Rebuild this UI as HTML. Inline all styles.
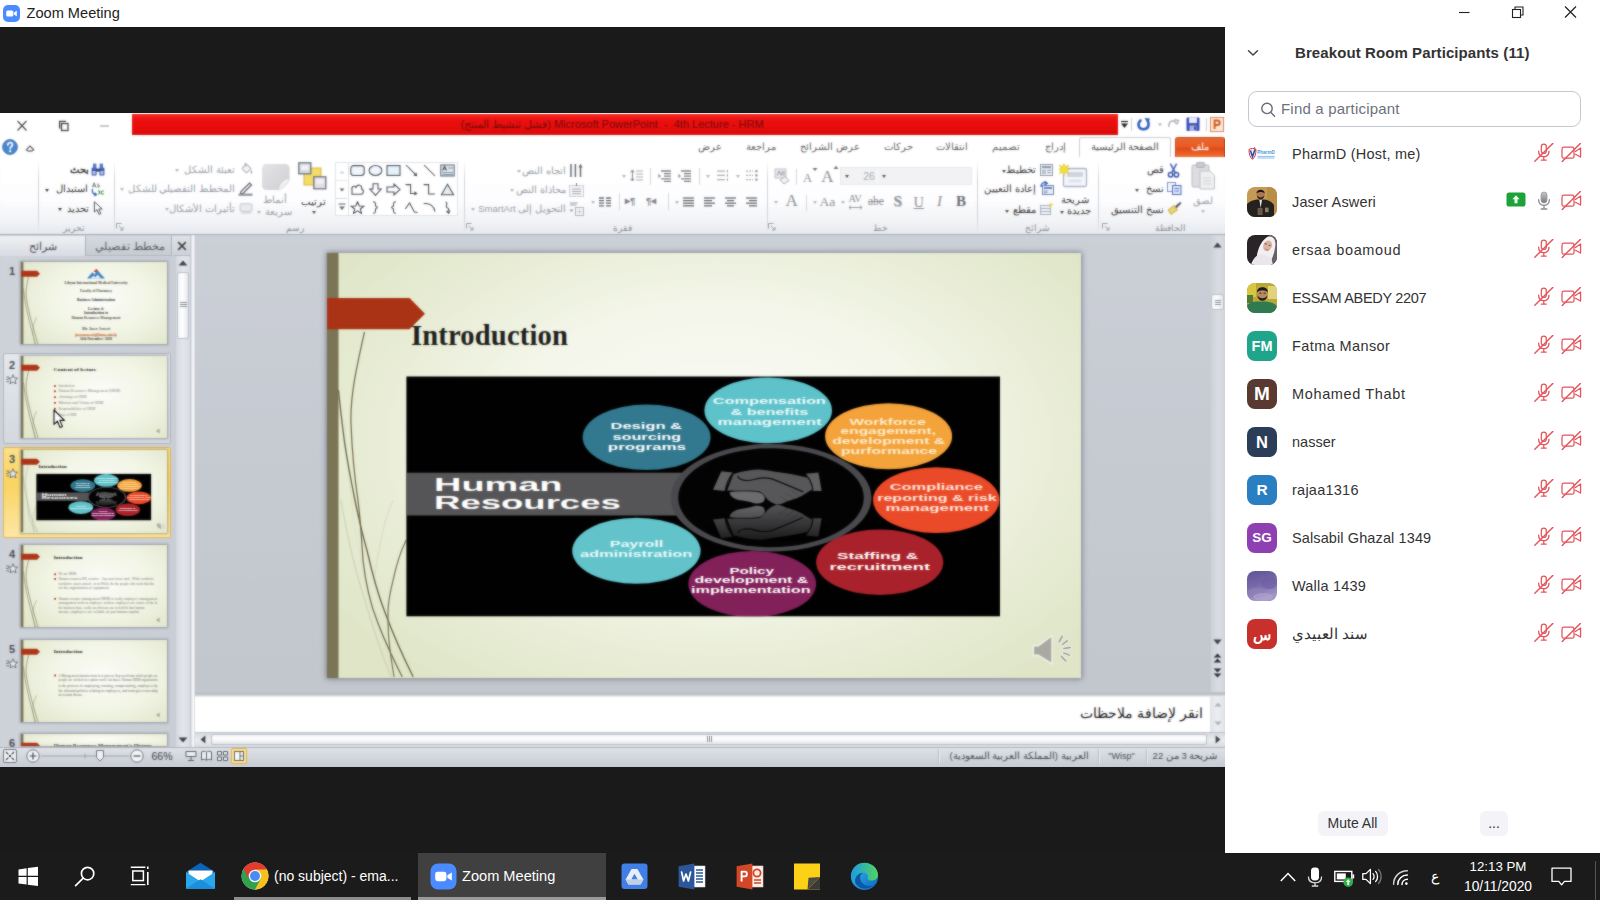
<!DOCTYPE html>
<html>
<head>
<meta charset="utf-8">
<title>Zoom Meeting</title>
<style>
*{box-sizing:border-box;margin:0;padding:0}
html,body{width:1600px;height:900px;overflow:hidden;background:#1a1a1a;font-family:"Liberation Sans",sans-serif;}
.abs{position:absolute}
#root{position:relative;width:1600px;height:900px;overflow:hidden;background:#1a1a1a}
#ztitle{position:absolute;left:0;top:0;width:1600px;height:27px;background:#fff}
#ztitle .txt{position:absolute;left:26.5px;top:5px;font-size:14.6px;color:#222}
#panel{position:absolute;left:1225px;top:27px;width:375px;height:826px;background:#fff}
#taskbar{position:absolute;left:0;top:853px;width:1600px;height:47px;background:#1b1b1b}
#pptin{position:absolute;left:0;top:0;width:1225px;height:654px;}
#ppt{position:absolute;left:0;top:113px;width:1225px;height:654px;background:#fff;overflow:hidden}
.phead{position:absolute;left:70px;top:17px;font-weight:bold;font-size:15px;color:#333;white-space:nowrap;letter-spacing:0.09px}
.psearch{position:absolute;left:23px;top:64px;width:333px;height:36px;border:1px solid #c4c6d0;border-radius:9px;background:#fff}
.psearch span{position:absolute;left:32px;top:8px;font-size:15px;letter-spacing:0.2px;color:#6c727c;white-space:nowrap}
.prow{position:absolute;left:0;width:375px;height:48px}
.pav{position:absolute;left:22px;top:9px;width:30px;height:30px;border-radius:8px;color:#fff;font-weight:bold;text-align:center;line-height:30px;overflow:hidden}
.pname{position:absolute;left:67px;top:16px;font-size:14.5px;color:#333;white-space:nowrap;line-height:17px}
.pbtn{position:absolute;height:25px;border-radius:6px;background:#f3f3f8;color:#333;font-size:14px;text-align:center;line-height:24px}
.tbt{position:absolute;top:14px;color:#fff;font-size:14px;line-height:18px;white-space:nowrap}
.tbc{position:absolute;left:1448px;width:100px;text-align:center;color:#fff;font-size:13.5px;line-height:17px;white-space:nowrap}
.ar{font-family:"Liberation Sans",sans-serif}
.tab{position:absolute;top:27px;height:16px;line-height:14px;font-size:10px;color:#666;text-align:center;white-space:nowrap;direction:rtl}
.rt{position:absolute;line-height:14px;white-space:nowrap;direction:rtl}
.th{position:absolute;overflow:hidden;background:radial-gradient(ellipse 65% 75% at 55% 45%,#fbfcf8 0%,#f1f4e4 55%,#e2e7cd 100%);box-shadow:0 0 2px 1px rgba(90,95,105,0.5)}
</style>
</head>
<body>
<div id="root">
<div id="ztitle">
  <svg class="abs" style="left:3px;top:5px" width="17" height="17" viewBox="0 0 17 17"><rect x="0" y="0" width="17" height="17" rx="5" fill="#4a8cff"/><rect x="3.2" y="5.4" width="7.2" height="6.2" rx="1.6" fill="#fff"/><path d="M11 7.6 L13.8 5.8 V11.2 L11 9.4Z" fill="#fff"/></svg>
  <div class="txt">Zoom Meeting</div>
</div>
<div id="ppt"><div id="pptin">
<!-- title row -->
<div class="abs" style="left:0;top:0;width:1225px;height:23px;background:#fff"></div>
<svg class="abs" style="left:14px;top:5px" width="100" height="16" viewBox="0 0 100 16" fill="none" stroke="#444" stroke-width="1.1"><path d="M3.5 3 L12.5 12.5 M12.5 3 L3.5 12.5"/><rect x="47.5" y="5.5" width="6.5" height="7" stroke-width="1.3"/><path d="M45.6 10.5 V3.4 H52" stroke-width="1.3"/><path d="M86 8 H95" stroke="#999"/></svg>
<div class="abs" style="left:132px;top:1px;width:985.5px;height:21.3px;background:linear-gradient(#f42a22,#ec1010 30%,#e40c0c 75%,#d80a0a)"></div>
<div class="abs ar" style="left:440px;top:4px;width:344px;text-align:center;font-size:11px;line-height:14px;color:#780a0a;white-space:nowrap" dir="rtl">Microsoft PowerPoint &nbsp;-&nbsp; 4th Lecture - HRM (فشل تنشيط المنتج)</div>
<!-- quick access -->
<svg class="abs" style="left:1118px;top:1px" width="107" height="21" viewBox="0 0 107 21">
  <path d="M3 9.5 H10 L6.5 14Z" fill="#222"/><path d="M3 7.5 H10" stroke="#222" stroke-width="1.2"/>
  <path d="M13.5 4 V17" stroke="#c8ccd2" stroke-width="1"/>
  <path d="M22.5 6.5 C19.5 9 19.5 15.2 25.6 15.2 C31 15.2 31.6 9.6 29.6 6.6" fill="none" stroke="#2f5fc2" stroke-width="2.6" stroke-linecap="round"/><path d="M26.4 4 L31.8 4.4 L30.4 9.6Z" fill="#2f5fc2"/>
  <path d="M40 9.5 H44 L42 12Z" fill="#aaa"/>
  <path d="M51 13 C50 7 56 5 58 9.4 M56.5 5.6 L60.5 6.5 L58.6 10.6" fill="none" stroke="#b2b6bc" stroke-width="1.6"/>
  <rect x="68.5" y="3.5" width="13" height="13.5" rx="1" fill="#3d4fb4"/><rect x="71" y="3.5" width="8" height="5.6" fill="#e8ecf8"/><rect x="71.5" y="11.5" width="7" height="5.5" fill="#a9b4e4"/><rect x="76" y="12.4" width="2" height="3.6" fill="#3d4fb4"/>
  <path d="M88.5 4 V17" stroke="#c8ccd2" stroke-width="1"/>
  <rect x="92.5" y="3.5" width="13" height="14" fill="#fbe9d9" stroke="#d9885a" stroke-width="1"/><path d="M96.6 15 V6.4 H99.4 C102.4 6.4 102.4 11 99.4 11 H96.6" fill="none" stroke="#d4581c" stroke-width="2"/>
</svg>
<!-- tab row -->
<div class="abs" style="left:0;top:23px;width:1225px;height:21px;background:#fff"></div>
<div class="abs" style="left:0;top:43.5px;width:1225px;height:1px;background:#d4d8de"></div>
<div class="abs" style="left:1079px;top:23.5px;width:92px;height:21px;background:#fff;border:1px solid #c9cdd4;border-bottom:none;border-radius:3px 3px 0 0"></div>
<div class="abs" style="left:1175px;top:24px;width:50px;height:20px;border-radius:3px 3px 0 0;background:linear-gradient(#e46a32,#ea5a22 45%,#e04a1a 55%,#ee7030);border:1px solid #c84818;border-bottom:none"></div>
<div class="tab" style="left:1175px;width:50px;color:#fff">ملف</div>
<div class="tab" style="left:1079px;width:92px;color:#555">الصفحة الرئيسية</div>
<div class="tab" style="left:1030px;width:50px">إدراج</div>
<div class="tab" style="left:981px;width:50px">تصميم</div>
<div class="tab" style="left:921px;width:62px">انتقالات</div>
<div class="tab" style="left:873px;width:50px">حركات</div>
<div class="tab" style="left:794px;width:72px">عرض الشرائح</div>
<div class="tab" style="left:736px;width:50px">مراجعة</div>
<div class="tab" style="left:685px;width:50px">عرض</div>
<svg class="abs" style="left:2px;top:24px" width="50" height="20" viewBox="0 0 50 20"><circle cx="8" cy="10" r="7.4" fill="#4a86cc"/><circle cx="8" cy="10" r="7.4" fill="none" stroke="#2f66a8" stroke-width="0.8"/><path d="M5.8 8 C5.8 4.6 10.6 4.8 10.4 7.8 C10.2 9.6 8.2 9.6 8.2 11.6" fill="none" stroke="#fff" stroke-width="1.7" stroke-linecap="round"/><circle cx="8.2" cy="14.2" r="1.1" fill="#fff"/><path d="M24.4 12.6 L28 9 L31.6 12.6 C31.6 14.6 24.4 14.6 24.4 12.6Z" fill="none" stroke="#555" stroke-width="1.1"/></svg>
<!-- ribbon body -->
<div class="abs" style="left:0;top:44px;width:1225px;height:77px;background:linear-gradient(#fff,#fdfdfe 55%,#f0f2f5 85%,#e6e9ee)"></div>
<div class="abs" style="left:0;top:120.5px;width:1225px;height:1.5px;background:#a6abb4"></div>
<div class="abs" style="left:1098px;top:46px;width:1px;height:72px;background:linear-gradient(rgba(200,204,212,0),#cfd3da 30%,#cfd3da 80%,rgba(200,204,212,0.3))"></div>
<div class="abs" style="left:977px;top:46px;width:1px;height:72px;background:linear-gradient(rgba(200,204,212,0),#cfd3da 30%,#cfd3da 80%,rgba(200,204,212,0.3))"></div>
<div class="abs" style="left:767px;top:46px;width:1px;height:72px;background:linear-gradient(rgba(200,204,212,0),#cfd3da 30%,#cfd3da 80%,rgba(200,204,212,0.3))"></div>
<div class="abs" style="left:464px;top:46px;width:1px;height:72px;background:linear-gradient(rgba(200,204,212,0),#cfd3da 30%,#cfd3da 80%,rgba(200,204,212,0.3))"></div>
<div class="abs" style="left:114px;top:46px;width:1px;height:72px;background:linear-gradient(rgba(200,204,212,0),#cfd3da 30%,#cfd3da 80%,rgba(200,204,212,0.3))"></div>
<div class="abs" style="left:38px;top:46px;width:1px;height:72px;background:linear-gradient(rgba(200,204,212,0),#cfd3da 30%,#cfd3da 80%,rgba(200,204,212,0.3))"></div>
<div class="rt" style="left:1130.0px;width:80px;text-align:center;top:107.5px;color:#8a8e96;font-size:9px">الحافظة</div>
<div class="rt" style="left:997.0px;width:80px;text-align:center;top:107.5px;color:#8a8e96;font-size:9px">شرائح</div>
<div class="rt" style="left:840.0px;width:80px;text-align:center;top:107.5px;color:#8a8e96;font-size:9px">خط</div>
<div class="rt" style="left:582.0px;width:80px;text-align:center;top:107.5px;color:#8a8e96;font-size:9px">فقرة</div>
<div class="rt" style="left:255.0px;width:80px;text-align:center;top:107.5px;color:#8a8e96;font-size:9px">رسم</div>
<div class="rt" style="left:34.0px;width:80px;text-align:center;top:107.5px;color:#8a8e96;font-size:9px">تحرير</div>
<svg class="abs" style="left:1102.0px;top:110.0px" width="8" height="8" viewBox="0 0 8 8"><path d="M0.5 5.5 V0.5 H5.5" fill="none" stroke="#9aa0a8" stroke-width="1"/><path d="M3 3 L7 7 M7 4 V7 H4" fill="none" stroke="#9aa0a8" stroke-width="1"/></svg>
<svg class="abs" style="left:768.0px;top:110.0px" width="8" height="8" viewBox="0 0 8 8"><path d="M0.5 5.5 V0.5 H5.5" fill="none" stroke="#9aa0a8" stroke-width="1"/><path d="M3 3 L7 7 M7 4 V7 H4" fill="none" stroke="#9aa0a8" stroke-width="1"/></svg>
<svg class="abs" style="left:466.0px;top:110.0px" width="8" height="8" viewBox="0 0 8 8"><path d="M0.5 5.5 V0.5 H5.5" fill="none" stroke="#9aa0a8" stroke-width="1"/><path d="M3 3 L7 7 M7 4 V7 H4" fill="none" stroke="#9aa0a8" stroke-width="1"/></svg>
<svg class="abs" style="left:116.0px;top:110.0px" width="8" height="8" viewBox="0 0 8 8"><path d="M0.5 5.5 V0.5 H5.5" fill="none" stroke="#9aa0a8" stroke-width="1"/><path d="M3 3 L7 7 M7 4 V7 H4" fill="none" stroke="#9aa0a8" stroke-width="1"/></svg>
<svg class="abs" style="left:1190.0px;top:48.0px" width="26" height="29" viewBox="0 0 26 29"><rect x="2" y="4" width="17" height="22" rx="1.5" fill="#dcdde0" stroke="#b9bbc0"/><rect x="6.5" y="1.5" width="8" height="5" rx="1.5" fill="#c9cacd" stroke="#aeb0b5"/><path d="M10 10 H20 L24.5 14.5 V28 H10Z" fill="#eeeff1" stroke="#bfc1c6"/><path d="M13 17 H21 M13 20 H21 M13 23 H21" stroke="#cfd1d5" stroke-width="1"/></svg>
<div class="rt" style="left:1163.0px;width:80px;text-align:center;top:81.0px;color:#9a9ea6;font-size:9.5px">لصق</div>
<div class="abs" style="left:1201.0px;top:97.0px;width:0;height:0;border-left:2.5px solid transparent;border-right:2.5px solid transparent;border-top:3px solid #b5b8be"></div>
<div class="rt" style="right:61.4px;top:50.3px;color:#3c3c3c;font-size:10px">قص</div>
<svg class="abs" style="left:1167.0px;top:49.5px" width="13" height="15" viewBox="0 0 13 15"><path d="M3.4 0.6 L8.4 10 M9.6 0.6 L4.6 10" stroke="#4a6ab8" stroke-width="1.6"/><circle cx="3.6" cy="11.8" r="2.2" fill="none" stroke="#3b55a8" stroke-width="1.5"/><circle cx="9.4" cy="11.8" r="2.2" fill="none" stroke="#3b55a8" stroke-width="1.5"/></svg>
<div class="rt" style="right:61.4px;top:69.4px;color:#3c3c3c;font-size:10px">نسخ</div>
<div class="abs" style="left:1134.7px;top:76.0px;width:0;height:0;border-left:2.5px solid transparent;border-right:2.5px solid transparent;border-top:3px solid #555"></div>
<svg class="abs" style="left:1166.5px;top:69.0px" width="15" height="13" viewBox="0 0 15 13"><rect x="0.5" y="0.5" width="8" height="9" fill="#f4f6fb" stroke="#7f93c8"/><rect x="5.5" y="3.5" width="8.5" height="9" fill="#dfe7f8" stroke="#4f6cc0"/><path d="M7.5 6.5 H12 M7.5 9 H12" stroke="#4f6cc0" stroke-width="0.9"/></svg>
<div class="rt" style="right:61.4px;top:90.0px;color:#3c3c3c;font-size:10px">نسخ التنسيق</div>
<svg class="abs" style="left:1167.0px;top:88.0px" width="15" height="15" viewBox="0 0 15 15"><path d="M1 9 L7 4.5 L10.4 9 L4 13.4Z" fill="#e9d46a" stroke="#b9a23a" stroke-width="0.8"/><path d="M8 5.2 L13.4 0.8 L14.4 2.2 L9.6 7.2Z" fill="#555a66"/></svg>
<svg class="abs" style="left:1058.5px;top:49.5px" width="29" height="26" viewBox="0 0 29 26"><rect x="4.5" y="5.5" width="23" height="18" rx="1.5" fill="#f3f5f9" stroke="#aab4c8" stroke-width="1.3"/><rect x="8" y="9" width="16" height="5" fill="#cfd5e0"/><rect x="9.5" y="16.5" width="13" height="3" fill="#dfe3ea"/><path d="M5 0.5 L6.4 3.6 L9.6 2 L8 5.2 L11 6.4 L8 7.6 L9.6 10.8 L6.4 9.2 L5 12.4 L3.6 9.2 L0.4 10.8 L2 7.6 L-1 6.4 L2 5.2 L0.4 2 L3.6 3.6Z" fill="#f2de3c" stroke="#d8b820" stroke-width="0.5"/></svg>
<div class="rt" style="left:1035.0px;width:80px;text-align:center;top:80.4px;color:#3c3c3c;font-size:9.5px">شريحة</div>
<div class="rt" style="left:1039.0px;width:80px;text-align:center;top:91.4px;color:#3c3c3c;font-size:9.5px">جديدة</div>
<div class="abs" style="left:1060.0px;top:98.0px;width:0;height:0;border-left:2.5px solid transparent;border-right:2.5px solid transparent;border-top:3px solid #555"></div>
<div class="rt" style="right:189.0px;top:50.3px;color:#3c3c3c;font-size:10px">تخطيط</div>
<div class="abs" style="left:1001.7px;top:56.5px;width:0;height:0;border-left:2.5px solid transparent;border-right:2.5px solid transparent;border-top:3px solid #555"></div>
<svg class="abs" style="left:1039.5px;top:50.5px" width="13" height="12" viewBox="0 0 13 12"><rect x="0.5" y="0.5" width="12" height="11" fill="#eef1f6" stroke="#8e99ac"/><rect x="2" y="2" width="9" height="2.2" fill="#8e99ac"/><rect x="2" y="5.6" width="4" height="4.4" fill="#b8c0ce"/><path d="M7.4 6.2 H11 M7.4 8.6 H11" stroke="#8e99ac"/></svg>
<div class="rt" style="right:189.0px;top:69.4px;color:#3c3c3c;font-size:10px">إعادة التعيين</div>
<svg class="abs" style="left:1039.5px;top:68.0px" width="14" height="14" viewBox="0 0 14 14"><rect x="2.5" y="4.5" width="11" height="9" fill="#e8edf6" stroke="#6f86b8"/><rect x="4" y="6" width="8" height="2" fill="#6f86b8"/><rect x="4" y="9.4" width="3.4" height="3" fill="#9fb0d4"/><path d="M1 6 C1 2 4 0.6 6.6 2.2 M4.6 0.2 L7.2 2.4 L4.4 4" fill="none" stroke="#2f5fc2" stroke-width="1.4"/></svg>
<div class="rt" style="right:189.0px;top:90.0px;color:#3c3c3c;font-size:10px">مقطع</div>
<div class="abs" style="left:1004.6px;top:96.5px;width:0;height:0;border-left:2.5px solid transparent;border-right:2.5px solid transparent;border-top:3px solid #555"></div>
<svg class="abs" style="left:1039.5px;top:89.0px" width="14" height="13" viewBox="0 0 14 13"><rect x="0.5" y="3.5" width="10" height="9" fill="#f0f2f6" stroke="#a8b0c0"/><path d="M0.5 6.5 H10.5 M0.5 9.5 H10.5" stroke="#a8b0c0"/><path d="M11 0 L11.8 2 L14 2.6 L11.8 3.4 L11 5.4 L10.2 3.4 L8 2.6 L10.2 2Z" fill="#f0dc40"/></svg>
<div class="abs" style="left:840px;top:54px;width:131.5px;height:18px;background:#f1f2f4;border:1px solid #e6e8ec"></div>
<div class="abs" style="left:876.5px;top:55px;width:1px;height:16px;background:#fbfbfc"></div>
<div class="abs" style="left:859px;top:57px;width:20px;font-size:10.5px;line-height:12px;color:#a9adb3;text-align:center">26</div>
<div class="abs" style="left:845.0px;top:62.0px;width:0;height:0;border-left:2.5px solid transparent;border-right:2.5px solid transparent;border-top:3px solid #555"></div>
<div class="abs" style="left:882.0px;top:62.0px;width:0;height:0;border-left:2.5px solid transparent;border-right:2.5px solid transparent;border-top:3px solid #555"></div>
<div class="abs" style="left:812.5px;width:30px;text-align:center;top:53.5px;font-family:'Liberation Serif',serif;font-size:17px;line-height:19.5px;color:#8c9097;">A</div>
<svg class="abs" style="left:833.0px;top:52.0px" width="6" height="5" viewBox="0 0 6 5"><path d="M0.5 4 L3 0.8 L5.5 4Z" fill="#777"/></svg>
<div class="abs" style="left:792.5px;width:30px;text-align:center;top:57.8px;font-family:'Liberation Serif',serif;font-size:12.5px;line-height:14.4px;color:#8c9097;">A</div>
<svg class="abs" style="left:811.5px;top:54.0px" width="6" height="5" viewBox="0 0 6 5"><path d="M0.5 1 L3 4 L5.5 1Z" fill="#777"/></svg>
<div class="abs" style="left:796px;top:56px;width:1px;height:16px;background:#d4d7dc"></div>
<svg class="abs" style="left:773.5px;top:55.0px" width="17" height="17" viewBox="0 0 17 17"><rect x="1" y="1" width="11" height="9" fill="#e9eaed" stroke="#b4b7bd" stroke-width="0.8"/><path d="M3 7.5 L5 3 L7 7.5 M8 3 V7.5 M10 3 V7.5" fill="none" stroke="#8b8f96" stroke-width="0.9"/><path d="M6 12 L11 8.5 L15 12.5 L10 16Z" fill="#f2f2f4" stroke="#a4a7ad" stroke-width="0.9"/></svg>
<div class="abs" style="left:946.0px;width:30px;text-align:center;top:80.2px;font-family:'Liberation Serif',serif;font-size:15px;line-height:17.2px;color:#6b6f76;font-weight:bold">B</div>
<div class="abs" style="left:924.5px;width:30px;text-align:center;top:80.2px;font-family:'Liberation Serif',serif;font-size:15px;line-height:17.2px;color:#8c9097;font-style:italic">I</div>
<div class="abs" style="left:903.8px;width:30px;text-align:center;top:80.5px;font-family:'Liberation Serif',serif;font-size:14.5px;line-height:16.7px;color:#8c9097;text-decoration:underline">U</div>
<div class="abs" style="left:882.7px;width:30px;text-align:center;top:79.7px;font-family:'Liberation Serif',serif;font-size:15px;line-height:17.2px;color:#8c9097;font-weight:bold;text-shadow:1px 1px 0 #d0d2d6">S</div>
<div class="abs" style="left:861.0px;width:30px;text-align:center;top:81.9px;font-family:'Liberation Serif',serif;font-size:11.5px;line-height:13.2px;color:#8c9097;text-decoration:line-through">abe</div>
<div class="abs" style="left:840.0px;width:30px;text-align:center;top:80.0px;font-family:'Liberation Serif',serif;font-size:10.5px;line-height:12.1px;color:#8c9097;letter-spacing:-0.5px">AV</div>
<svg class="abs" style="left:848.0px;top:92.0px" width="15" height="5" viewBox="0 0 15 5"><path d="M1 2.5 H14 M3 0.6 L1 2.5 L3 4.4 M12 0.6 L14 2.5 L12 4.4" fill="none" stroke="#8c9097" stroke-width="0.9"/></svg>
<div class="abs" style="left:841.0px;top:87.5px;width:0;height:0;border-left:2.5px solid transparent;border-right:2.5px solid transparent;border-top:3px solid #b3b6bc"></div>
<div class="abs" style="left:812.3px;width:30px;text-align:center;top:81.1px;font-family:'Liberation Serif',serif;font-size:13.5px;line-height:15.5px;color:#8c9097;">Aa</div>
<div class="abs" style="left:813.3px;top:87.5px;width:0;height:0;border-left:2.5px solid transparent;border-right:2.5px solid transparent;border-top:3px solid #b3b6bc"></div>
<div class="abs" style="left:806px;top:82px;width:1px;height:16px;background:#d4d7dc"></div>
<div class="abs" style="left:776.6px;width:30px;text-align:center;top:78.0px;font-family:'Liberation Serif',serif;font-size:17px;line-height:19.5px;color:#8c9097;">A</div>
<div class="abs" style="left:774.0px;top:87.5px;width:0;height:0;border-left:2.5px solid transparent;border-right:2.5px solid transparent;border-top:3px solid #b3b6bc"></div>
<svg class="abs" style="left:746.1px;top:84.0px" width="11" height="10" viewBox="0 0 11 10"><path d="M0 1.0 H11" stroke="#666a72" stroke-width="1.3"/><path d="M3 3.6 H11" stroke="#666a72" stroke-width="1.3"/><path d="M0 6.2 H11" stroke="#666a72" stroke-width="1.3"/><path d="M3 8.8 H11" stroke="#666a72" stroke-width="1.3"/></svg>
<svg class="abs" style="left:725.4px;top:84.0px" width="11" height="10" viewBox="0 0 11 10"><path d="M0 1.0 H11" stroke="#666a72" stroke-width="1.3"/><path d="M2 3.6 H9" stroke="#666a72" stroke-width="1.3"/><path d="M0 6.2 H11" stroke="#666a72" stroke-width="1.3"/><path d="M2 8.8 H9" stroke="#666a72" stroke-width="1.3"/></svg>
<svg class="abs" style="left:703.9px;top:84.0px" width="11" height="10" viewBox="0 0 11 10"><path d="M0 1.0 H11" stroke="#666a72" stroke-width="1.3"/><path d="M0 3.6 H8" stroke="#666a72" stroke-width="1.3"/><path d="M0 6.2 H11" stroke="#666a72" stroke-width="1.3"/><path d="M0 8.8 H8" stroke="#666a72" stroke-width="1.3"/></svg>
<svg class="abs" style="left:683.1px;top:84.0px" width="11" height="10" viewBox="0 0 11 10"><path d="M0 1.0 H11" stroke="#666a72" stroke-width="1.3"/><path d="M0 3.6 H11" stroke="#666a72" stroke-width="1.3"/><path d="M0 6.2 H11" stroke="#666a72" stroke-width="1.3"/><path d="M0 8.8 H11" stroke="#666a72" stroke-width="1.3"/></svg>
<div class="abs" style="left:675.4px;top:87.5px;width:0;height:0;border-left:2.5px solid transparent;border-right:2.5px solid transparent;border-top:3px solid #b3b6bc"></div>
<div class="abs" style="left:668px;top:80px;width:1px;height:17px;background:#d4d7dc"></div>
<div class="abs" style="left:646px;top:82px;width:16px;font-size:9.5px;line-height:12px;color:#7d8188;font-weight:bold;white-space:nowrap">&para;&#9666;</div>
<div class="abs" style="left:625px;top:82px;width:16px;font-size:9.5px;line-height:12px;color:#7d8188;font-weight:bold;white-space:nowrap">&#9656;&para;</div>
<div class="abs" style="left:619px;top:80px;width:1px;height:17px;background:#d4d7dc"></div>
<svg class="abs" style="left:598.5px;top:84.0px" width="12" height="10" viewBox="0 0 12 10"><path d="M0 1 H5 M7 1 H12 M0 3.6 H5 M7 3.6 H12 M0 6.2 H5 M7 6.2 H12 M0 8.8 H5 M7 8.8 H12" stroke="#666a72" stroke-width="1.3"/></svg>
<div class="abs" style="left:591.3px;top:87.5px;width:0;height:0;border-left:2.5px solid transparent;border-right:2.5px solid transparent;border-top:3px solid #b3b6bc"></div>
<svg class="abs" style="left:745.5px;top:57.0px" width="12" height="11" viewBox="0 0 12 11"><path d="M0 1.2 H7 M0 5.4 H7 M0 9.6 H7" stroke="#a9adb4" stroke-width="1.2" stroke-dasharray="2 1"/><rect x="9.4" y="0.2" width="2" height="2" fill="#7d8188"/><rect x="9.4" y="4.4" width="2" height="2" fill="#7d8188"/><rect x="9.4" y="8.6" width="2" height="2" fill="#7d8188"/></svg>
<div class="abs" style="left:736.0px;top:61.5px;width:0;height:0;border-left:2.5px solid transparent;border-right:2.5px solid transparent;border-top:3px solid #b3b6bc"></div>
<svg class="abs" style="left:716.5px;top:57.0px" width="12" height="11" viewBox="0 0 12 11"><path d="M0 1.2 H8 M0 5.4 H8 M0 9.6 H8" stroke="#a9adb4" stroke-width="1.2"/><path d="M10.4 0 V2.4 M10.4 4.2 V6.6 M10.4 8.4 V10.8" stroke="#9094a0" stroke-width="1"/></svg>
<div class="abs" style="left:706.0px;top:61.5px;width:0;height:0;border-left:2.5px solid transparent;border-right:2.5px solid transparent;border-top:3px solid #b3b6bc"></div>
<div class="abs" style="left:698.5px;top:55px;width:1px;height:17px;background:#d4d7dc"></div>
<svg class="abs" style="left:678.3px;top:56.5px" width="13" height="12" viewBox="0 0 13 12"><path d="M3 1 H13 M6 3.6 H13 M6 6.2 H13 M3 8.8 H13 M6 11.4 H13" stroke="#7d8188" stroke-width="1.3"/><path d="M0.4 3.8 L3 6 L0.4 8.2Z" fill="#9094a0"/></svg>
<svg class="abs" style="left:657.9px;top:56.5px" width="13" height="12" viewBox="0 0 13 12"><path d="M3 1 H13 M6 3.6 H13 M6 6.2 H13 M3 8.8 H13 M6 11.4 H13" stroke="#7d8188" stroke-width="1.3"/><path d="M0.4 3.8 L3 6 L0.4 8.2Z" fill="#9094a0"/></svg>
<div class="abs" style="left:649.5px;top:55px;width:1px;height:17px;background:#d4d7dc"></div>
<svg class="abs" style="left:629.5px;top:56.0px" width="13" height="13" viewBox="0 0 13 13"><path d="M6 2 H13 M6 5 H13 M6 8 H13 M6 11 H13" stroke="#a9adb4" stroke-width="1.2"/><path d="M2.4 1.4 V11.6 M0.6 3.4 L2.4 1 L4.2 3.4 M0.6 9.6 L2.4 12 L4.2 9.6" fill="none" stroke="#7d8188" stroke-width="1"/></svg>
<div class="abs" style="left:621.7px;top:61.5px;width:0;height:0;border-left:2.5px solid transparent;border-right:2.5px solid transparent;border-top:3px solid #b3b6bc"></div>
<div class="rt" style="right:659.0px;top:50.9px;color:#9a9ea6;font-size:9.5px">اتجاه النص</div>
<div class="abs" style="left:517.0px;top:56.5px;width:0;height:0;border-left:2.5px solid transparent;border-right:2.5px solid transparent;border-top:3px solid #b3b6bc"></div>
<svg class="abs" style="left:569.0px;top:50.0px" width="15" height="15" viewBox="0 0 15 15"><path d="M2 1 V14 M6.4 1 V14 M11.5 3 V14" stroke="#666a72" stroke-width="1.5"/><path d="M9.4 4.4 L11.5 0.8 L13.6 4.4Z" fill="#666a72"/></svg>
<div class="rt" style="right:659.0px;top:69.9px;color:#9a9ea6;font-size:9.5px">محاذاة النص</div>
<div class="abs" style="left:510.0px;top:75.5px;width:0;height:0;border-left:2.5px solid transparent;border-right:2.5px solid transparent;border-top:3px solid #b3b6bc"></div>
<svg class="abs" style="left:569.0px;top:69.5px" width="15" height="15" viewBox="0 0 15 15"><rect x="0.5" y="2.5" width="14" height="11" fill="#f3f4f6" stroke="#a9adb4" stroke-width="0.9" stroke-dasharray="1.5 1"/><path d="M3 6 H12 M3 8.4 H12 M3 10.8 H12" stroke="#a9adb4" stroke-width="1"/><path d="M7.5 0 V3" stroke="#7d8188"/></svg>
<div class="rt" style="right:659.0px;top:89.0px;color:#9a9ea6;font-size:9.5px">التحويل إلى SmartArt</div>
<div class="abs" style="left:470.6px;top:95.0px;width:0;height:0;border-left:2.5px solid transparent;border-right:2.5px solid transparent;border-top:3px solid #b3b6bc"></div>
<svg class="abs" style="left:569.0px;top:88.0px" width="15" height="15" viewBox="0 0 15 15"><path d="M1 1 H9 L7 5 H1Z" fill="#c9ccd2"/><rect x="6.5" y="6.5" width="8" height="8" fill="#f3f4f6" stroke="#a9adb4" stroke-width="0.9"/><path d="M8 10.5 H13 M10.5 8 V13" stroke="#bfc2c8" stroke-width="0.8"/><path d="M0.6 8.6 L4.4 8.6 L2.4 11Z" fill="#9094a0"/></svg>
<div class="abs" style="left:335px;top:49px;width:122.5px;height:54px;background:#fff;border:1px solid #dfe2e7"></div>
<div class="abs" style="left:347.5px;top:50px;width:1px;height:52px;background:#dfe2e7"></div>
<div class="abs" style="left:336px;top:67px;width:11px;height:1px;background:#e4e6ea"></div>
<div class="abs" style="left:336px;top:85px;width:11px;height:1px;background:#d6d9df"></div>
<svg class="abs" style="left:338.5px;top:56.5px" width="6" height="4" viewBox="0 0 6 4"><path d="M0.5 3.6 L3 0.6 L5.5 3.6Z" fill="#d0d3d8"/></svg>
<svg class="abs" style="left:338.5px;top:74.5px" width="6" height="4" viewBox="0 0 6 4"><path d="M0.5 0.4 L3 3.4 L5.5 0.4Z" fill="#666a72"/></svg>
<svg class="abs" style="left:337.5px;top:90.0px" width="8" height="8" viewBox="0 0 8 8"><path d="M0.5 1 H7.5" stroke="#666a72" stroke-width="1.1"/><path d="M1 3.4 L4 7 L7 3.4Z" fill="#666a72"/></svg>
<svg class="abs" style="left:350.0px;top:51.2px" width="15" height="13" viewBox="0 0 15 13"><rect x="0.8" y="1.6" width="13.4" height="9.8" rx="3" stroke="#4b505a" stroke-width="1.05"  fill="#f0f6fb"/></svg>
<svg class="abs" style="left:367.7px;top:51.2px" width="15" height="13" viewBox="0 0 15 13"><ellipse cx="7.5" cy="6.5" rx="6.4" ry="5" stroke="#4b505a" stroke-width="1.05"  fill="#f0f6fb"/></svg>
<svg class="abs" style="left:385.7px;top:51.2px" width="15" height="13" viewBox="0 0 15 13"><rect x="1" y="1.6" width="13" height="9.8" stroke="#4b505a" stroke-width="1.05"  fill="#e6f1f9"/></svg>
<svg class="abs" style="left:404.3px;top:51.2px" width="15" height="13" viewBox="0 0 15 13"><path d="M2 1 L12.4 11.4" stroke="#4b505a" stroke-width="1.05" fill="none"/><path d="M13.2 12.2 L9.4 11.4 L12.4 8.4Z" fill="#4b505a"/></svg>
<svg class="abs" style="left:422.0px;top:51.2px" width="15" height="13" viewBox="0 0 15 13"><path d="M2 1 L13 12" stroke="#4b505a" stroke-width="1.05" fill="none"/></svg>
<svg class="abs" style="left:440.3px;top:51.2px" width="15" height="13" viewBox="0 0 15 13"><rect x="0.8" y="1" width="13.4" height="11" fill="#dfe9f2" stroke="#5d6470" stroke-width="1"/><path d="M2.6 6.4 L4.6 2.2 L6.6 6.4 M3.4 5 H5.8" stroke="#4b505a" stroke-width="1.05" fill="none"/><path d="M8 4 H13 M2.4 8.6 H13 M2.4 10.6 H13" stroke="#7d8590" stroke-width="0.9"/></svg>
<svg class="abs" style="left:350.0px;top:69.7px" width="15" height="13" viewBox="0 0 15 13"><path d="M2 11.2 V7 C1 3 5 2.4 6 4.4 C7 0.8 12.6 1.6 11.6 6 C14 6.4 14 11.2 11 11.2Z" stroke="#4b505a" stroke-width="1.05" fill="none"/></svg>
<svg class="abs" style="left:367.7px;top:69.7px" width="15" height="13" viewBox="0 0 15 13"><path d="M5 0.8 H10 V6 H13.2 L7.5 12.4 L1.8 6 H5Z" stroke="#4b505a" stroke-width="1.05" fill="none"/></svg>
<svg class="abs" style="left:385.7px;top:69.7px" width="15" height="13" viewBox="0 0 15 13"><path d="M1 4 H8 V1 L14 6.5 L8 12 V9 H1Z" stroke="#4b505a" stroke-width="1.05" fill="none"/></svg>
<svg class="abs" style="left:404.3px;top:69.7px" width="15" height="13" viewBox="0 0 15 13"><path d="M1.6 1.6 H6.6 V10.4 H11" stroke="#4b505a" stroke-width="1.05" fill="none"/><path d="M13.6 10.4 L10.4 8.2 V12.6Z" fill="#4b505a"/></svg>
<svg class="abs" style="left:422.0px;top:69.7px" width="15" height="13" viewBox="0 0 15 13"><path d="M1.6 1.6 H6.6 V11 H13" stroke="#4b505a" stroke-width="1.05" fill="none"/></svg>
<svg class="abs" style="left:440.3px;top:69.7px" width="15" height="13" viewBox="0 0 15 13"><path d="M7.5 1.2 L13.6 11.8 H1.4Z" stroke="#4b505a" stroke-width="1.05"  fill="#e6eef5"/></svg>
<svg class="abs" style="left:350.0px;top:87.7px" width="15" height="13" viewBox="0 0 15 13"><path d="M7.5 0.8 L9.3 5 L13.8 5.2 L10.3 8 L11.5 12.4 L7.5 9.8 L3.5 12.4 L4.7 8 L1.2 5.2 L5.7 5Z" stroke="#4b505a" stroke-width="1.05" fill="none"/></svg>
<svg class="abs" style="left:367.7px;top:87.7px" width="15" height="13" viewBox="0 0 15 13"><path d="M5 0.8 C7.6 0.8 7.4 2.2 7.4 3.6 C7.4 5.2 7.6 6.1 9.8 6.5 C7.6 6.9 7.4 7.8 7.4 9.4 C7.4 10.8 7.6 12.2 5 12.2" stroke="#4b505a" stroke-width="1.05" fill="none"/></svg>
<svg class="abs" style="left:385.7px;top:87.7px" width="15" height="13" viewBox="0 0 15 13"><path d="M10 0.8 C7.4 0.8 7.6 2.2 7.6 3.6 C7.6 5.2 7.4 6.1 5.2 6.5 C7.4 6.9 7.6 7.8 7.6 9.4 C7.6 10.8 7.4 12.2 10 12.2" stroke="#4b505a" stroke-width="1.05" fill="none"/></svg>
<svg class="abs" style="left:404.3px;top:87.7px" width="15" height="13" viewBox="0 0 15 13"><path d="M1.2 8 L5.6 2 L10.4 11 L13.6 11.4" stroke="#4b505a" stroke-width="1.05" fill="none"/></svg>
<svg class="abs" style="left:422.0px;top:87.7px" width="15" height="13" viewBox="0 0 15 13"><path d="M1.6 2.6 C7.6 1.6 12 5 13 10.6" stroke="#4b505a" stroke-width="1.05" fill="none"/></svg>
<svg class="abs" style="left:440.3px;top:87.7px" width="15" height="13" viewBox="0 0 15 13"><path d="M5.6 1 C9.6 3 3.6 5 7.6 7 C10.6 8.4 6.6 9.6 8.4 12 M6.4 10 L8.6 12.4 L10 9.6" stroke="#4b505a" stroke-width="1.05" fill="none"/></svg>
<svg class="abs" style="left:298.0px;top:48.5px" width="29" height="28" viewBox="0 0 29 28"><rect x="6" y="6" width="17" height="17" fill="#f4dc68" stroke="#d8b93c"/><rect x="0.8" y="0.8" width="12" height="11" fill="#d8dbe0" stroke="#6d727c" stroke-width="1.3"/><rect x="2.8" y="3" width="8" height="5" fill="#eef1f5"/><rect x="15.8" y="14.8" width="12" height="12" fill="#e4dfe6" stroke="#6d727c" stroke-width="1.3"/><rect x="17.8" y="17" width="8" height="5" fill="#f1eef3"/></svg>
<div class="rt" style="left:273.7px;width:80px;text-align:center;top:81.5px;color:#3c3c3c;font-size:9.5px">ترتيب</div>
<div class="abs" style="left:311.7px;top:97.5px;width:0;height:0;border-left:2.5px solid transparent;border-right:2.5px solid transparent;border-top:3px solid #555"></div>
<svg class="abs" style="left:260.5px;top:49.5px" width="30" height="28" viewBox="0 0 30 28"><defs><linearGradient id="qs" x1="0" y1="0" x2="1" y2="1"><stop offset="0" stop-color="#e4e3e6"/><stop offset="1" stop-color="#cfced2"/></linearGradient></defs><path d="M5 1 H23 C27 1 28.6 3 28.6 6 V15 L17 27 H6 C2.6 27 1 25 1 22 V6 C1 3 2.6 1 5 1Z" fill="url(#qs)"/><path d="M28.6 15 C24 15.6 18.6 18.6 17 27 C22 25.6 27.6 21 28.6 15Z" fill="#f0eff2" stroke="#c6c5ca" stroke-width="0.6"/></svg>
<div class="rt" style="left:235.0px;width:80px;text-align:center;top:80.0px;color:#9a9ea6;font-size:9.5px">أنماط</div>
<div class="rt" style="left:238.0px;width:80px;text-align:center;top:92.0px;color:#9a9ea6;font-size:9.5px">سريعة</div>
<div class="abs" style="left:257.0px;top:98.0px;width:0;height:0;border-left:2.5px solid transparent;border-right:2.5px solid transparent;border-top:3px solid #b3b6bc"></div>
<div class="rt" style="right:990.0px;top:50.4px;color:#9a9ea6;font-size:9.5px">تعبئة الشكل</div>
<div class="abs" style="left:175.0px;top:56.0px;width:0;height:0;border-left:2.5px solid transparent;border-right:2.5px solid transparent;border-top:3px solid #b3b6bc"></div>
<svg class="abs" style="left:239.0px;top:48.5px" width="14" height="14" viewBox="0 0 14 14"><path d="M3 6.4 L7.6 2 L12 6.6 L7.4 11Z" fill="#f4f4f6" stroke="#8f939b" stroke-width="1"/><path d="M6.6 0.6 C5 2.4 6.4 4.4 7.8 4" fill="none" stroke="#8f939b" stroke-width="0.9"/><path d="M12.4 8 C13.6 10 13.4 11.4 12.4 11.4 C11.4 11.4 11.2 10 12.4 8Z" fill="#9a9ea6"/></svg>
<div class="rt" style="right:990.0px;top:69.4px;color:#9a9ea6;font-size:9.5px">المخطط التفصيلي للشكل</div>
<div class="abs" style="left:120.0px;top:75.0px;width:0;height:0;border-left:2.5px solid transparent;border-right:2.5px solid transparent;border-top:3px solid #b3b6bc"></div>
<svg class="abs" style="left:238.0px;top:69.0px" width="15" height="14" viewBox="0 0 15 14"><path d="M3 9.4 L11.6 1 L13.6 3 L5 11.4 L2.4 12Z" fill="#ececee" stroke="#5d626c" stroke-width="1.1"/><rect x="0.5" y="11.6" width="14" height="2.2" fill="#8d9199"/></svg>
<div class="rt" style="right:990.0px;top:88.5px;color:#9a9ea6;font-size:9.5px">تأثيرات الأشكال</div>
<div class="abs" style="left:165.0px;top:94.5px;width:0;height:0;border-left:2.5px solid transparent;border-right:2.5px solid transparent;border-top:3px solid #b3b6bc"></div>
<svg class="abs" style="left:238.5px;top:89.5px" width="14" height="11" viewBox="0 0 14 11"><rect x="1" y="0.8" width="12" height="7.6" rx="1.4" fill="#e9eaed" stroke="#bfc2c8" stroke-width="0.9"/><path d="M2 10 H12" stroke="#d6d8dc" stroke-width="1.6"/></svg>
<div class="rt" style="right:1136.0px;top:50.4px;color:#3c3c3c;font-size:10px;font-weight:bold">بحث</div>
<svg class="abs" style="left:91.0px;top:50.0px" width="14" height="13" viewBox="0 0 14 13"><rect x="0.6" y="4.6" width="5" height="8" rx="1.2" fill="#3e5aa8"/><rect x="8.4" y="4.6" width="5" height="8" rx="1.2" fill="#3e5aa8"/><rect x="2" y="0.6" width="3.4" height="5" fill="#5878c4"/><rect x="8.6" y="0.6" width="3.4" height="5" fill="#5878c4"/><rect x="5" y="5.6" width="4" height="3" fill="#2f478c"/><rect x="1.6" y="8" width="3" height="3.4" fill="#b6c6ea"/><rect x="9.4" y="8" width="3" height="3.4" fill="#b6c6ea"/></svg>
<div class="rt" style="right:1137.5px;top:69.4px;color:#3c3c3c;font-size:10px">استبدال</div>
<div class="abs" style="left:45.0px;top:75.5px;width:0;height:0;border-left:2.5px solid transparent;border-right:2.5px solid transparent;border-top:3px solid #444"></div>
<svg class="abs" style="left:90.0px;top:68.5px" width="15" height="15" viewBox="0 0 15 15"><path d="M2.4 5.4 L4.2 0.8 L6 5.4 M3 4 H5.4" fill="none" stroke="#666a72" stroke-width="0.9"/><path d="M8 1.4 V5.4 M8 3.4 C9.6 2.4 10.6 5.4 8 5.4" fill="none" stroke="#666a72" stroke-width="0.8"/><path d="M2.6 7 C1.6 10 3 12.6 6 12.6 M4.4 14 L6.4 12.6 L4.6 10.8" fill="none" stroke="#3f62b4" stroke-width="1.3"/><path d="M8 9 C10 8 10.4 12 8 12 M11 10.6 C11 8.6 13.6 8.6 13.6 9.6 M11 10.6 C11 12.6 13.6 12.4 13.6 11.6" fill="none" stroke="#3d9a4a" stroke-width="1.1"/></svg>
<div class="rt" style="right:1136.0px;top:88.5px;color:#3c3c3c;font-size:10px">تحديد</div>
<div class="abs" style="left:57.5px;top:94.5px;width:0;height:0;border-left:2.5px solid transparent;border-right:2.5px solid transparent;border-top:3px solid #444"></div>
<svg class="abs" style="left:93.0px;top:88.0px" width="11" height="15" viewBox="0 0 11 15"><path d="M1.4 0.8 V11 L4 8.6 L6 13.4 L7.8 12.6 L5.8 8 H9.2Z" fill="#fff" stroke="#50555f" stroke-width="1"/></svg>
<!-- below ribbon -->
<div class="abs" style="left:0;top:122px;width:1225px;height:512px;background:linear-gradient(#cbcfd6,#c6cad1 40%,#c1c5cc)"></div>
<div class="abs" style="left:0;top:122px;width:191px;height:512px;background:linear-gradient(90deg,#ced2d9,#c9cdd5)"></div>
<div class="abs" style="left:0;top:122.5px;width:191px;height:20px;background:linear-gradient(#e3e6eb,#d3d7de)"></div>
<div class="abs" style="left:0;top:122.5px;width:86px;height:20.5px;background:linear-gradient(#eef0f3,#d9dce3);border-right:1px solid #aab0ba"></div>
<div class="abs" style="left:86px;top:122.5px;width:86px;height:20px;background:linear-gradient(#d5d9e0,#c6cbd3);border-right:1px solid #aab0ba;border-bottom:1px solid #b4b9c2"></div>
<div class="abs" style="left:173px;top:122.5px;width:18px;height:20px;background:linear-gradient(#dfe2e7,#cdd1d8);border-bottom:1px solid #b4b9c2"></div>
<div class="rt" style="left:13px;width:60px;text-align:center;top:125.5px;font-size:10.5px;color:#4a4e56">شرائح</div>
<div class="rt" style="left:92px;width:76px;text-align:center;top:125.5px;font-size:10.5px;color:#5a5e66">مخطط تفصيلي</div>
<svg class="abs" style="left:177px;top:128px" width="10" height="10" viewBox="0 0 10 10"><path d="M1.2 1.2 L8.8 8.8 M8.8 1.2 L1.2 8.8" stroke="#444" stroke-width="1.7"/></svg>
<div class="abs" style="left:175.5px;top:143px;width:14.5px;height:491px;background:linear-gradient(90deg,#d5d8de,#e4e6ea 50%,#d9dce1)"></div>
<svg class="abs" style="left:178px;top:147px" width="10" height="6" viewBox="0 0 10 6"><path d="M0.6 5.4 L5 0.6 L9.4 5.4Z" fill="#3e424a"/></svg>
<div class="abs" style="left:176.5px;top:158.5px;width:12.5px;height:67px;border:1px solid #b9bec8;border-radius:2px;background:linear-gradient(90deg,#f4f5f7,#fdfdfe 45%,#e6e8ec)"></div>
<div class="abs" style="left:179.5px;top:188.5px;width:7px;height:1px;background:#8d929c;box-shadow:0 2px 0 #8d929c,0 4px 0 #8d929c"></div>
<svg class="abs" style="left:178px;top:623.5px" width="10" height="6" viewBox="0 0 10 6"><path d="M0.6 0.6 L5 5.4 L9.4 0.6Z" fill="#3e424a"/></svg>
<div class="abs" style="left:190px;top:122px;width:5px;height:513px;background:linear-gradient(90deg,#b8bdc6,#eef0f3 45%,#fafbfc 70%,#c9cdd4)"></div>
<div class="abs" style="left:3px;top:239.5px;width:168px;height:91px;border:1px solid #b0b5be;border-radius:2px;background:linear-gradient(#e4e7ec,#d4d8df)"></div>
<div class="abs" style="left:3px;top:334px;width:168px;height:91px;border:1px solid #e6b44c;border-radius:2px;background:linear-gradient(#fbe08a,#f9d462 40%,#fbe7a4)"></div>
<div class="abs" style="left:5px;width:14px;text-align:center;top:152.2px;font-size:11px;line-height:13px;font-weight:bold;color:#4a4e56">1</div>
<div class="abs" style="left:5px;width:14px;text-align:center;top:245.8px;font-size:11px;line-height:13px;font-weight:bold;color:#4a4e56">2</div>
<div class="abs" style="left:5px;width:14px;text-align:center;top:340.4px;font-size:11px;line-height:13px;font-weight:bold;color:#4a4e56">3</div>
<div class="abs" style="left:5px;width:14px;text-align:center;top:435.1px;font-size:11px;line-height:13px;font-weight:bold;color:#4a4e56">4</div>
<div class="abs" style="left:5px;width:14px;text-align:center;top:529.8px;font-size:11px;line-height:13px;font-weight:bold;color:#4a4e56">5</div>
<div class="abs" style="left:5px;width:14px;text-align:center;top:623.7px;font-size:11px;line-height:13px;font-weight:bold;color:#4a4e56">6</div>
<svg class="abs" style="left:6px;top:260.8px" width="12" height="11" viewBox="0 0 12 11"><path d="M7 0.8 L8.4 4 L11.6 4.2 L9.2 6.4 L10 9.8 L7 8 L4 9.8 L4.8 6.4 L2.4 4.2 L5.6 4Z" fill="#e4e6ea" stroke="#555a64" stroke-width="0.8"/><path d="M0.4 3 H3 M0.2 5.4 H2.4 M0.4 7.8 H3" stroke="#555a64" stroke-width="0.8"/></svg>
<svg class="abs" style="left:6px;top:355.4px" width="12" height="11" viewBox="0 0 12 11"><path d="M7 0.8 L8.4 4 L11.6 4.2 L9.2 6.4 L10 9.8 L7 8 L4 9.8 L4.8 6.4 L2.4 4.2 L5.6 4Z" fill="#e4e6ea" stroke="#555a64" stroke-width="0.8"/><path d="M0.4 3 H3 M0.2 5.4 H2.4 M0.4 7.8 H3" stroke="#555a64" stroke-width="0.8"/></svg>
<svg class="abs" style="left:6px;top:450.1px" width="12" height="11" viewBox="0 0 12 11"><path d="M7 0.8 L8.4 4 L11.6 4.2 L9.2 6.4 L10 9.8 L7 8 L4 9.8 L4.8 6.4 L2.4 4.2 L5.6 4Z" fill="#e4e6ea" stroke="#555a64" stroke-width="0.8"/><path d="M0.4 3 H3 M0.2 5.4 H2.4 M0.4 7.8 H3" stroke="#555a64" stroke-width="0.8"/></svg>
<svg class="abs" style="left:6px;top:544.8px" width="12" height="11" viewBox="0 0 12 11"><path d="M7 0.8 L8.4 4 L11.6 4.2 L9.2 6.4 L10 9.8 L7 8 L4 9.8 L4.8 6.4 L2.4 4.2 L5.6 4Z" fill="#e4e6ea" stroke="#555a64" stroke-width="0.8"/><path d="M0.4 3 H3 M0.2 5.4 H2.4 M0.4 7.8 H3" stroke="#555a64" stroke-width="0.8"/></svg>
<div class="th" style="left:21.3px;top:149.2px;width:145.8px;height:82.3px"><svg class="abs" style="left:0;top:0" width="145.8" height="82.3" viewBox="0 0 145.8 82.3"><rect x="0" y="0" width="2.4" height="82.3" fill="#7b7456"/><path d="M0 8.7 H16 L19 11.75 L16 14.8 H0Z" fill="#ae3518"/><g fill="none" stroke-linecap="round"><path d="M7.4 15.4 C5.6 23 4.6 29 5.2 34 C6.6 48 13.2 69 17 82" stroke="#85825f" stroke-width="0.7"/><path d="M2.6 27 C3.6 42 9.4 65 14.6 82" stroke="#8c8966" stroke-width="0.7"/><path d="M15.4 55.6 C12.6 61.4 11 67.2 12.2 73 C12.8 77 13.4 79.6 13.8 82" stroke="#9c9a78" stroke-width="0.6"/></g><path d="M66 16.6 L71.4 10.2 L73.6 12.4 L76.4 8.2 L84 16.6Z" fill="#3f86c4"/><path d="M72.6 9.2 L75.6 7 L77.2 9 L74.6 10.6Z" fill="#d5362c"/><path d="M69.4 16.6 L72.4 13.8 L74.4 15.2 L76.8 12.8 L80 16.6Z" fill="#e9f1f8"/><text x="43.5" y="21.6" textLength="63.0" lengthAdjust="spacingAndGlyphs" font-size="3.6" font-family="'Liberation Serif',serif" font-weight="bold" fill="#4a4a46">Libyan International Medical University</text><text x="59.0" y="30.2" textLength="32.0" lengthAdjust="spacingAndGlyphs" font-size="3.5" font-family="'Liberation Serif',serif" font-weight="bold" fill="#55554f">Faculty of Pharmacy</text><text x="56.0" y="39.0" textLength="38.0" lengthAdjust="spacingAndGlyphs" font-size="3.6" font-family="'Liberation Serif',serif" font-weight="bold" fill="#33332f">Business Administration</text><text x="67.0" y="48.0" textLength="16.0" lengthAdjust="spacingAndGlyphs" font-size="3.6" font-family="'Liberation Serif',serif" font-weight="bold" fill="#33332f">Lecture 4:</text><text x="63.0" y="51.7" textLength="24.0" lengthAdjust="spacingAndGlyphs" font-size="3.6" font-family="'Liberation Serif',serif" font-weight="bold" fill="#33332f">Introduction to</text><text x="50.5" y="56.9" textLength="49.0" lengthAdjust="spacingAndGlyphs" font-size="3.6" font-family="'Liberation Serif',serif" font-weight="bold" fill="#55554f">Human Resources Management</text><text x="61.0" y="67.6" textLength="28.0" lengthAdjust="spacingAndGlyphs" font-size="3.5" font-family="'Liberation Serif',serif" font-weight="bold" fill="#55554f">Mr. Jaser Asweri</text><text x="54.0" y="73.6" textLength="42.0" lengthAdjust="spacingAndGlyphs" font-size="3.5" font-family="'Liberation Serif',serif" font-weight="bold" fill="#d0673c">jaserasweri@limu.edu.ly</text><text x="59.0" y="78.2" textLength="32.0" lengthAdjust="spacingAndGlyphs" font-size="3.6" font-family="'Liberation Serif',serif" font-weight="bold" fill="#33332f">11th November / 2020</text><path d="M54 73.8 H96" stroke="#d0673c" stroke-width="0.4"/></svg></div>
<div class="th" style="left:21.3px;top:242.8px;width:145.8px;height:82.3px"><svg class="abs" style="left:0;top:0" width="145.8" height="82.3" viewBox="0 0 145.8 82.3"><rect x="0" y="0" width="2.4" height="82.3" fill="#7b7456"/><path d="M0 8.7 H16 L19 11.75 L16 14.8 H0Z" fill="#ae3518"/><g fill="none" stroke-linecap="round"><path d="M7.4 15.4 C5.6 23 4.6 29 5.2 34 C6.6 48 13.2 69 17 82" stroke="#85825f" stroke-width="0.7"/><path d="M2.6 27 C3.6 42 9.4 65 14.6 82" stroke="#8c8966" stroke-width="0.7"/><path d="M15.4 55.6 C12.6 61.4 11 67.2 12.2 73 C12.8 77 13.4 79.6 13.8 82" stroke="#9c9a78" stroke-width="0.6"/></g><text x="32.6" y="15.2" textLength="42.8" lengthAdjust="spacingAndGlyphs" font-size="5" font-family="'Liberation Serif',serif" font-weight="bold" fill="#2a2a28">Content of lecture</text><rect x="33" y="29.2" width="1.8" height="1.8" fill="#b8391c"/><text x="37.4" y="31.3" textLength="16.0" lengthAdjust="spacingAndGlyphs" font-size="3.4" font-family="'Liberation Serif',serif" fill="#85857d">Introduction</text><rect x="33" y="34.4" width="1.8" height="1.8" fill="#b8391c"/><text x="37.4" y="36.5" textLength="62.0" lengthAdjust="spacingAndGlyphs" font-size="3.4" font-family="'Liberation Serif',serif" fill="#85857d">Human Resources Management (HRM)</text><rect x="33" y="40.3" width="1.8" height="1.8" fill="#b8391c"/><text x="37.4" y="42.4" textLength="28.0" lengthAdjust="spacingAndGlyphs" font-size="3.4" font-family="'Liberation Serif',serif" fill="#85857d">Advantages of HRM</text><rect x="33" y="46" width="1.8" height="1.8" fill="#b8391c"/><text x="37.4" y="48.1" textLength="45.0" lengthAdjust="spacingAndGlyphs" font-size="3.4" font-family="'Liberation Serif',serif" fill="#85857d">Mission and Vision of HRM</text><rect x="33" y="51.9" width="1.8" height="1.8" fill="#b8391c"/><text x="37.4" y="54.0" textLength="37.0" lengthAdjust="spacingAndGlyphs" font-size="3.4" font-family="'Liberation Serif',serif" fill="#85857d">Responsibilities of HRM</text><rect x="33" y="57.7" width="1.8" height="1.8" fill="#b8391c"/><text x="37.4" y="59.8" textLength="18.0" lengthAdjust="spacingAndGlyphs" font-size="3.4" font-family="'Liberation Serif',serif" fill="#85857d">Future of HRM</text><path d="M138.6 72.6 L135 75 L138.6 77.4Z" fill="#a9ab98"/></svg></div>
<div class="th" style="left:21.3px;top:337.4px;width:145.8px;height:82.3px"><svg class="abs" style="left:0;top:0" width="145.8" height="82.3" viewBox="0 0 145.8 82.3"><g transform="scale(0.19337) translate(-327 -252.5)"><use href="#slideart"/></g><text x="17.6" y="18.5" textLength="28.0" lengthAdjust="spacingAndGlyphs" font-size="4.6" font-family="'Liberation Serif',serif" font-weight="bold" fill="#2a2a28">Introduction</text><path d="M138.6 72.6 L135 75 L138.6 77.4Z" fill="#a9ab98"/></svg></div>
<div class="th" style="left:21.3px;top:432.1px;width:145.8px;height:82.3px"><svg class="abs" style="left:0;top:0" width="145.8" height="82.3" viewBox="0 0 145.8 82.3"><rect x="0" y="0" width="2.4" height="82.3" fill="#7b7456"/><path d="M0 8.7 H16 L19 11.75 L16 14.8 H0Z" fill="#ae3518"/><g fill="none" stroke-linecap="round"><path d="M7.4 15.4 C5.6 23 4.6 29 5.2 34 C6.6 48 13.2 69 17 82" stroke="#85825f" stroke-width="0.7"/><path d="M2.6 27 C3.6 42 9.4 65 14.6 82" stroke="#8c8966" stroke-width="0.7"/><path d="M15.4 55.6 C12.6 61.4 11 67.2 12.2 73 C12.8 77 13.4 79.6 13.8 82" stroke="#9c9a78" stroke-width="0.6"/></g><text x="32.8" y="13.9" textLength="28.7" lengthAdjust="spacingAndGlyphs" font-size="4.6" font-family="'Liberation Serif',serif" font-weight="bold" fill="#2a2a28">Introduction</text><text x="37.5" y="30.5" textLength="18.2" lengthAdjust="spacingAndGlyphs" font-size="3.3" font-family="'Liberation Serif',serif" fill="#77776f">We use HRM:</text><text x="37.5" y="35.2" textLength="95.7" lengthAdjust="spacingAndGlyphs" font-size="3.3" font-family="'Liberation Serif',serif" fill="#77776f">Human resources:HR, resource - Any asset in use such , While workforce</text><text x="37.5" y="39.6" textLength="95.7" lengthAdjust="spacingAndGlyphs" font-size="3.3" font-family="'Liberation Serif',serif" fill="#77776f">workforce assets owned , in its  While   the the people who work that the</text><text x="37.5" y="43.8" textLength="50.9" lengthAdjust="spacingAndGlyphs" font-size="3.3" font-family="'Liberation Serif',serif" fill="#77776f">for the organization  or equipment.</text><text x="37.5" y="55.0" textLength="98.7" lengthAdjust="spacingAndGlyphs" font-size="3.3" font-family="'Liberation Serif',serif" fill="#77776f">Human resource management (HRM) or really  employee&apos;s management</text><text x="37.5" y="59.5" textLength="98.7" lengthAdjust="spacingAndGlyphs" font-size="3.3" font-family="'Liberation Serif',serif" fill="#77776f">management work on employee as those employees are source of the in</text><text x="37.5" y="63.7" textLength="86.0" lengthAdjust="spacingAndGlyphs" font-size="3.3" font-family="'Liberation Serif',serif" fill="#77776f">the business base, really an efficient, use to hold  In that human</text><text x="37.5" y="67.9" textLength="81.2" lengthAdjust="spacingAndGlyphs" font-size="3.3" font-family="'Liberation Serif',serif" fill="#77776f">means, employees are reliable  as you human capital.</text><rect x="33.2" y="28.4" width="1.8" height="1.8" fill="#b8391c"/><rect x="33.2" y="33.1" width="1.8" height="1.8" fill="#b8391c"/><rect x="33.2" y="52.9" width="1.8" height="1.8" fill="#b8391c"/><path d="M138.6 72.6 L135 75 L138.6 77.4Z" fill="#a9ab98"/></svg></div>
<div class="th" style="left:21.3px;top:526.8px;width:145.8px;height:82.3px"><svg class="abs" style="left:0;top:0" width="145.8" height="82.3" viewBox="0 0 145.8 82.3"><rect x="0" y="0" width="2.4" height="82.3" fill="#7b7456"/><path d="M0 8.7 H16 L19 11.75 L16 14.8 H0Z" fill="#ae3518"/><g fill="none" stroke-linecap="round"><path d="M7.4 15.4 C5.6 23 4.6 29 5.2 34 C6.6 48 13.2 69 17 82" stroke="#85825f" stroke-width="0.7"/><path d="M2.6 27 C3.6 42 9.4 65 14.6 82" stroke="#8c8966" stroke-width="0.7"/><path d="M15.4 55.6 C12.6 61.4 11 67.2 12.2 73 C12.8 77 13.4 79.6 13.8 82" stroke="#9c9a78" stroke-width="0.6"/></g><text x="32.8" y="13.3" textLength="28.7" lengthAdjust="spacingAndGlyphs" font-size="4.6" font-family="'Liberation Serif',serif" font-weight="bold" fill="#2a2a28">Introduction</text><text x="37.5" y="36.7" textLength="99.2" lengthAdjust="spacingAndGlyphs" font-size="3.4" font-family="'Liberation Serif',serif" fill="#6c6c64">A Management function from in is process Step used from which people are</text><text x="37.5" y="41.3" textLength="99.2" lengthAdjust="spacingAndGlyphs" font-size="3.4" font-family="'Liberation Serif',serif" fill="#6c6c64">people are worked on explain work Can bases. Human HRM organization</text><text x="37.5" y="46.7" textLength="99.2" lengthAdjust="spacingAndGlyphs" font-size="3.4" font-family="'Liberation Serif',serif" fill="#6c6c64">is  the  process  of  employing,  training,  compensating, employees by</text><text x="37.5" y="51.8" textLength="99.2" lengthAdjust="spacingAndGlyphs" font-size="3.4" font-family="'Liberation Serif',serif" fill="#6c6c64">the allround policies  relating  to  employees, and strategies ownership</text><text x="37.5" y="56.0" textLength="24.0" lengthAdjust="spacingAndGlyphs" font-size="3.4" font-family="'Liberation Serif',serif" fill="#6c6c64">to retain them.</text><rect x="33.2" y="34.6" width="1.8" height="1.8" fill="#b8391c"/><path d="M138.6 72.6 L135 75 L138.6 77.4Z" fill="#a9ab98"/></svg></div>
<div class="th" style="left:21.3px;top:620.7px;width:145.8px;height:12.8px"><svg class="abs" style="left:0;top:0" width="145.8" height="82.3" viewBox="0 0 145.8 82.3"><rect x="0" y="0" width="2.4" height="82.3" fill="#7b7456"/><path d="M0 8.7 H16 L19 11.75 L16 14.8 H0Z" fill="#ae3518"/><g fill="none" stroke-linecap="round"><path d="M7.4 15.4 C5.6 23 4.6 29 5.2 34 C6.6 48 13.2 69 17 82" stroke="#85825f" stroke-width="0.7"/><path d="M2.6 27 C3.6 42 9.4 65 14.6 82" stroke="#8c8966" stroke-width="0.7"/><path d="M15.4 55.6 C12.6 61.4 11 67.2 12.2 73 C12.8 77 13.4 79.6 13.8 82" stroke="#9c9a78" stroke-width="0.6"/></g><text x="32.8" y="13.3" textLength="97.6" lengthAdjust="spacingAndGlyphs" font-size="4.8" font-family="'Liberation Serif',serif" font-weight="bold" fill="#3a3a38">Human Resources Management&apos;s History</text></svg></div>
<svg class="abs" style="left:53px;top:296px" width="13" height="20" viewBox="0 0 13 20"><path d="M1 1 V15.4 L4.4 12.2 L7 18.4 L9.4 17.4 L6.8 11.4 H11.4Z" fill="#fff" stroke="#111" stroke-width="1.1" stroke-linejoin="round"/></svg>
<div class="abs" style="left:327px;top:139.5px;width:754px;height:425.5px;box-shadow:0 0 5px 1px rgba(70,75,90,0.55);background:radial-gradient(ellipse 62% 70% at 52% 45%,#fbfcf8 0%,#f4f6ea 45%,#e6ebd2 80%,#dfe5c8 100%)"></div>
<svg class="abs" style="left:327px;top:139.5px" width="754" height="425.5" viewBox="327 252.5 754 425.5"><g id="slideart"><rect x="327" y="252.5" width="11.5" height="425.5" fill="#7b7456"/><g fill="none" stroke-linecap="round"><path d="M341 500 C347 535 355 570 365 600 C373 628 382 654 391 676" stroke="#cfd2b8" stroke-width="1.2"/><path d="M393 500 C386 515 382 532 379 550 C377 560 376 566 375 574" stroke="#d6d9c2" stroke-width="1"/><path d="M345 420 C346 450 349 480 352 505 C356 540 364 580 372 610" stroke="#dde0cc" stroke-width="0.9"/><path d="M364.4 332 C357 365 350 395 351 423 C352 450 355 480 358 500 C361 525 362 545 363 560 C366 585 371 605 377 620 C385 642 394 660 402 676" stroke="#726d4e" stroke-width="1.25"/><path d="M338.5 390 C341 415 343 430 344.7 443 C348 465 352 485 355 500 C359 520 363 536 367 550 C372 572 378 594 385 612 C394 636 404 658 413 676" stroke="#6b6648" stroke-width="1.35"/><path d="M406 540 C400 552 396 566 393 580 C390 592 388 602 388 612 C388 622 388 632 389 640 C390 652 392 664 394 676" stroke="#7a7556" stroke-width="1.2"/></g><path d="M327 297.6 H409.5 L425 313.2 L409.5 328.8 H327Z" fill="#aa3315"/><rect x="406.4" y="376" width="593.6" height="239.8" fill="#020202"/><clipPath id="imgc"><rect x="406.4" y="376" width="593.6" height="239.8"/></clipPath><g clip-path="url(#imgc)"><rect x="406.4" y="472.2" width="290" height="42.8" fill="#565557"/><ellipse cx="771" cy="497.2" rx="100.5" ry="53.8" fill="#4b4b4f"/><ellipse cx="771" cy="497.2" rx="92.8" ry="49.5" fill="#040404"/><defs><g id="hsg"><path d="M245 240 L335 250 L270 395 L180 385Z" fill="#606062"/><path d="M905 260 L1005 250 L1030 395 L955 395Z" fill="#606062"/><path d="M290 392 L340 262 C420 240 500 225 560 228 C620 235 700 250 790 262 L900 285 C940 300 955 340 950 388 L895 420 C860 445 800 465 760 475 C730 490 700 505 670 498 C640 490 610 470 590 440 C575 420 560 405 540 400 Z" fill="#58585a"/><path d="M310 410 C330 385 420 385 480 395 C540 395 590 420 585 455 C580 490 545 500 500 490 C470 480 440 475 410 470 C370 465 320 450 310 410Z" fill="#6c6c6e"/><path d="M372 278 C385 310 440 322 500 305 C540 292 580 285 640 300 C720 330 800 365 885 402" fill="none" stroke="#0c0c0c" stroke-width="9"/><path d="M338 252 C300 300 280 350 276 396 M903 262 C945 310 960 350 962 396" fill="none" stroke="#0c0c0c" stroke-width="9"/><path d="M700 430 L760 470 M745 410 L810 450 M790 392 L850 428" fill="none" stroke="#3e3e40" stroke-width="5"/><path d="M300 400 C400 392 480 392 545 402" fill="none" stroke="#0c0c0c" stroke-width="7"/></g><linearGradient id="hsf" x1="0" y1="0" x2="0" y2="1"><stop offset="0" stop-color="#000" stop-opacity="0"/><stop offset="1" stop-color="#000" stop-opacity="0.7"/></linearGradient></defs><g transform="translate(690 440) scale(0.12781)"><use href="#hsg"/></g><g transform="translate(690 440) scale(0.12781) translate(0 1004) scale(1 -1)" opacity="0.95"><use href="#hsg"/></g><clipPath id="ringc"><ellipse cx="771" cy="497.2" rx="92.8" ry="49.5"/></clipPath><rect x="708" y="505" width="120" height="36" fill="url(#hsf)" clip-path="url(#ringc)"/><ellipse cx="646.6" cy="436.7" rx="64.0" ry="32.8" fill="#32798f"/><ellipse cx="768.2" cy="409.9" rx="63.8" ry="32.9" fill="#5ec2c9"/><ellipse cx="888.6" cy="435.7" rx="63.5" ry="33.0" fill="#f3a23a"/><ellipse cx="936.2" cy="499.6" rx="63.2" ry="32.9" fill="#ea4a28"/><ellipse cx="879.7" cy="561.7" rx="63.6" ry="32.7" fill="#a9232b"/><ellipse cx="752.2" cy="583.5" rx="63.9" ry="33.0" fill="#82205a"/><ellipse cx="636.4" cy="550.3" rx="64.2" ry="33.0" fill="#63c3cb"/><text x="434.0" y="490.1" textLength="128.5" lengthAdjust="spacingAndGlyphs" font-size="18.2" font-weight="bold" fill="#fff">Human</text><text x="434.0" y="508.1" textLength="186.8" lengthAdjust="spacingAndGlyphs" font-size="18.2" font-weight="bold" fill="#fff">Resources</text><text x="610.5" y="428.2" textLength="71.5" lengthAdjust="spacingAndGlyphs" font-size="9" font-weight="bold" fill="#fff">Design &amp;</text><text x="612.5" y="439.0" textLength="68.5" lengthAdjust="spacingAndGlyphs" font-size="9" font-weight="bold" fill="#fff">sourcing</text><text x="607.8" y="449.6" textLength="78.2" lengthAdjust="spacingAndGlyphs" font-size="9" font-weight="bold" fill="#fff">programs</text><text x="712.8" y="403.2" textLength="113.0" lengthAdjust="spacingAndGlyphs" font-size="9" font-weight="bold" fill="#e9fafa">Compensation</text><text x="730.6" y="414.0" textLength="77.7" lengthAdjust="spacingAndGlyphs" font-size="9" font-weight="bold" fill="#e9fafa">&amp; benefits</text><text x="717.5" y="424.6" textLength="104.2" lengthAdjust="spacingAndGlyphs" font-size="9" font-weight="bold" fill="#e9fafa">management</text><text x="849.4" y="424.5" textLength="76.4" lengthAdjust="spacingAndGlyphs" font-size="8.7" font-weight="bold" fill="#fdeccc">Workforce</text><text x="840.6" y="433.9" textLength="95.4" lengthAdjust="spacingAndGlyphs" font-size="8.7" font-weight="bold" fill="#fdeccc">engagement,</text><text x="832.2" y="443.3" textLength="113.1" lengthAdjust="spacingAndGlyphs" font-size="8.7" font-weight="bold" fill="#fdeccc">development &amp;</text><text x="841.0" y="453.1" textLength="96.0" lengthAdjust="spacingAndGlyphs" font-size="8.7" font-weight="bold" fill="#fdeccc">purformance</text><text x="889.7" y="489.9" textLength="93.1" lengthAdjust="spacingAndGlyphs" font-size="9" font-weight="bold" fill="#fde6dc">Compliance</text><text x="877.2" y="500.2" textLength="119.5" lengthAdjust="spacingAndGlyphs" font-size="9" font-weight="bold" fill="#fde6dc">reporting &amp; risk</text><text x="885.6" y="510.2" textLength="103.4" lengthAdjust="spacingAndGlyphs" font-size="9" font-weight="bold" fill="#fde6dc">management</text><text x="837.0" y="558.2" textLength="81.3" lengthAdjust="spacingAndGlyphs" font-size="9.8" font-weight="bold" fill="#fff">Staffing &amp;</text><text x="829.4" y="569.5" textLength="100.6" lengthAdjust="spacingAndGlyphs" font-size="9.8" font-weight="bold" fill="#fff">recruitment</text><text x="729.4" y="573.2" textLength="44.5" lengthAdjust="spacingAndGlyphs" font-size="9" font-weight="bold" fill="#fff">Policy</text><text x="694.4" y="582.6" textLength="113.9" lengthAdjust="spacingAndGlyphs" font-size="9" font-weight="bold" fill="#fff">development &amp;</text><text x="691.0" y="592.6" textLength="119.6" lengthAdjust="spacingAndGlyphs" font-size="9" font-weight="bold" fill="#fff">implementation</text><text x="609.7" y="546.0" textLength="53.6" lengthAdjust="spacingAndGlyphs" font-size="9" font-weight="bold" fill="#e9fafa">Payroll</text><text x="580.0" y="556.0" textLength="112.2" lengthAdjust="spacingAndGlyphs" font-size="9" font-weight="bold" fill="#e9fafa">administration</text></g><g transform="translate(1032.5 632.5)" stroke-linecap="round"><path d="M0.8 12.6 H6 L19.6 2.4 V31 L6 22.4 H0.8Z" fill="#a9a9a2" stroke="#eff1e6" stroke-width="1.6" stroke-linejoin="round"/><path d="M26.7 8.9 L29.8 3.1 M29.8 11.5 L35.0 7.7 M31.4 15.5 L37.8 14.6 M31.0 19.9 L37.1 22.1 M28.8 23.3 L33.3 27.9" fill="none" stroke="#f1f3e8" stroke-width="3.6"/><path d="M26.7 8.9 L29.8 3.1 M29.8 11.5 L35.0 7.7 M31.4 15.5 L37.8 14.6 M31.0 19.9 L37.1 22.1 M28.8 23.3 L33.3 27.9" fill="none" stroke="#8c8c86" stroke-width="1.5"/></g></g></svg>
<div class="abs" style="left:411px;top:206.5px;letter-spacing:0.15px;font-family:'Liberation Serif',serif;font-weight:bold;font-size:28.6px;line-height:32px;color:#1d1d1b;white-space:nowrap" id="stitle">Introduction</div>
<div class="abs" style="left:1210.5px;top:122px;width:14.5px;height:462px;background:linear-gradient(90deg,#cdd1d8,#d9dce2 55%,#d2d5dc)"></div>
<svg class="abs" style="left:1213px;top:129px" width="9" height="6" viewBox="0 0 9 6"><path d="M0.4 5.4 L4.5 0.6 L8.6 5.4Z" fill="#3e424a"/></svg>
<div class="abs" style="left:1211px;top:181px;width:13px;height:16px;border:1px solid #b9bec8;border-radius:2px;background:linear-gradient(90deg,#f4f5f7,#fdfdfe 45%,#e6e8ec)"></div>
<div class="abs" style="left:1214.5px;top:186.5px;width:6px;height:1px;background:#8d929c;box-shadow:0 2px 0 #8d929c,0 4px 0 #8d929c"></div>
<svg class="abs" style="left:1213px;top:526px" width="9" height="6" viewBox="0 0 9 6"><path d="M0.4 0.6 L4.5 5.4 L8.6 0.6Z" fill="#3e424a"/></svg>
<svg class="abs" style="left:1213px;top:540px" width="9" height="10" viewBox="0 0 9 10"><path d="M0.6 4.6 L4.5 0.6 L8.4 4.6Z M0.6 9.4 L4.5 5.4 L8.4 9.4Z" fill="#2e323a"/></svg>
<svg class="abs" style="left:1213px;top:555px" width="9" height="10" viewBox="0 0 9 10"><path d="M0.6 0.6 L4.5 4.6 L8.4 0.6Z M0.6 5.4 L4.5 9.4 L8.4 5.4Z" fill="#2e323a"/></svg>
<div class="abs" style="left:195px;top:579px;width:1030px;height:5px;background:linear-gradient(#c3c7cf,#b4b9c2 40%,#f2f3f5)"></div>
<div class="abs" style="left:195px;top:584px;width:1015px;height:34.5px;background:#fff"></div>
<div class="rt" style="right:22px;top:592px;font-size:14px;line-height:16px;color:#222">انقر لإضافة ملاحظات</div>
<div class="abs" style="left:1210px;top:584px;width:15px;height:34.5px;background:linear-gradient(90deg,#dfe2e7,#eceef1 50%,#dfe2e7)"></div>
<svg class="abs" style="left:1213.5px;top:589px" width="8" height="5" viewBox="0 0 8 5"><path d="M0.4 4.6 L4 0.4 L7.6 4.6Z" fill="#aeb3bc"/></svg>
<svg class="abs" style="left:1213.5px;top:608px" width="8" height="5" viewBox="0 0 8 5"><path d="M0.4 0.4 L4 4.6 L7.6 0.4Z" fill="#aeb3bc"/></svg>
<div class="abs" style="left:195px;top:618.5px;width:1030px;height:15px;background:linear-gradient(#d6d9df,#e9ebee 50%,#d9dce1);border-top:1px solid #bfc4cc"></div>
<div class="abs" style="left:211px;top:620.5px;width:996px;height:11.5px;border:1px solid #b9bec8;border-radius:2px;background:linear-gradient(#f6f7f9,#fdfdfe 45%,#e4e6ea)"></div>
<svg class="abs" style="left:199.5px;top:621.5px" width="6" height="9" viewBox="0 0 6 9"><path d="M5.4 0.4 L0.6 4.5 L5.4 8.6Z" fill="#3e424a"/></svg>
<svg class="abs" style="left:1214.5px;top:621.5px" width="6" height="9" viewBox="0 0 6 9"><path d="M0.6 0.4 L5.4 4.5 L0.6 8.6Z" fill="#3e424a"/></svg>
<div class="abs" style="left:707px;top:623px;width:1px;height:6px;background:#8d929c;box-shadow:2px 0 0 #8d929c,4px 0 0 #8d929c"></div>
<div class="abs" style="left:0;top:633.5px;width:1225px;height:20.5px;background:linear-gradient(#dfe2e7,#d3d7dd 45%,#c6cad2);border-top:1px solid #aeb3bc"></div>
<div class="rt" style="left:1150px;width:70px;text-align:center;top:636px;font-size:9.5px;color:#4a4e56">شريحة 3 من 22</div>
<div class="rt" style="left:1104px;width:35px;text-align:center;top:636px;font-size:9px;color:#4a4e56">"Wisp"</div>
<div class="rt" style="left:944px;width:150px;text-align:center;top:636px;font-size:9.5px;color:#4a4e56">العربية (المملكة العربية السعودية)</div>
<div class="abs" style="left:1146px;top:636px;width:1px;height:15px;background:#b4b9c2;box-shadow:1px 0 0 #eceef1"></div>
<div class="abs" style="left:1098px;top:636px;width:1px;height:15px;background:#b4b9c2;box-shadow:1px 0 0 #eceef1"></div>
<div class="abs" style="left:938px;top:636px;width:1px;height:15px;background:#b4b9c2;box-shadow:1px 0 0 #eceef1"></div>
<svg class="abs" style="left:3px;top:635px" width="250" height="16" viewBox="0 0 250 16"><rect x="0.5" y="1.5" width="13" height="13" rx="1.5" fill="#f1f2f4" stroke="#6d727c"/><path d="M3 4 L5.4 6.4 M11 4 L8.6 6.4 M3 12 L5.4 9.6 M11 12 L8.6 9.6" stroke="#3e424a" stroke-width="1.2"/><rect x="6" y="7" width="2" height="2" fill="#3e424a"/><circle cx="30" cy="8" r="6.2" fill="#f4f5f7" stroke="#6d727c"/><path d="M26.6 8 H33.4 M30 4.6 V11.4" stroke="#3e424a" stroke-width="1.2"/><path d="M38 8 H126" stroke="#9aa0aa" stroke-width="1"/><path d="M82 5.5 V10.5" stroke="#9aa0aa"/><path d="M93.5 2.5 H100.5 V9.5 L97 13 L93.5 9.5Z" fill="#f1f2f4" stroke="#6d727c"/><circle cx="134" cy="8" r="6.2" fill="#f4f5f7" stroke="#6d727c"/><path d="M130.6 8 H137.4" stroke="#3e424a" stroke-width="1.2"/><path d="M183 3.5 H193 V8.5 H183Z M188 8.5 V12.5 M185 12.5 H191" fill="#eef0f3" stroke="#5a5f69" stroke-width="1"/><path d="M198.5 4 C200.5 3 202.5 3 203.5 4.4 C204.5 3 206.5 3 208.5 4 V12 C206.5 11 204.5 11 203.5 12.4 C202.5 11 200.5 11 198.5 12Z M203.5 4.4 V12.4" fill="#eef0f3" stroke="#5a5f69" stroke-width="1"/><path d="M214.5 3.5 H218.5 V7 H214.5Z M220.5 3.5 H224.5 V7 H220.5Z M214.5 9 H218.5 V12.5 H214.5Z M220.5 9 H224.5 V12.5 H220.5Z" fill="#eef0f3" stroke="#5a5f69" stroke-width="1"/><rect x="228.5" y="0.5" width="15" height="15" rx="1.5" fill="#fbe49a" stroke="#e3b23c"/><rect x="231.5" y="3.5" width="9" height="9" fill="#fdfdf8" stroke="#5a5f69"/><path d="M237 3.5 V12.5 M237 8 H240.5" stroke="#5a5f69"/></svg>
<div class="abs" style="left:147px;top:636.5px;width:30px;text-align:center;font-size:10.5px;line-height:13px;color:#3e424a">66%</div>
<!--BOTTOM-->

</div><div class="abs" style="left:0;top:0;width:1225px;height:654px;backdrop-filter:blur(0.8px);opacity:0.55"></div></div>
<div id="panel">
<svg width="0" height="0" style="position:absolute">
 <defs>
  <g id="micoff" fill="none" stroke="#e2555a" stroke-width="1.25" stroke-linecap="round" stroke-linejoin="round">
    <rect x="7.3" y="1.2" width="5" height="9.2" rx="2.5"/>
    <path d="M4.6 8.2 C4.6 11.6 6.6 13.6 9.8 13.6 C13 13.6 15 11.6 15 8.2"/>
    <path d="M9.8 13.6 V16.8 M7.3 17 H12.3"/>
    <path d="M0.8 18.2 L18.8 0.4" stroke-width="1.4"/>
  </g>
  <g id="camoff" fill="none" stroke="#e2555a" stroke-width="1.25" stroke-linecap="round" stroke-linejoin="round">
    <rect x="1" y="4.2" width="12" height="11" rx="1.8"/>
    <path d="M14.4 8.4 L19.6 5 V14 L14.4 11.2"/>
    <path d="M1.2 18.4 L19.4 0.4" stroke-width="1.4"/>
  </g>
 </defs>
</svg>
<!-- window controls -->
<svg class="abs" style="left:233px;top:-23.5px" width="130" height="16" viewBox="0 0 130 16" fill="none" stroke="#222" stroke-width="1.1">
  <path d="M1 8.5 H11.5"/>
  <rect x="54.5" y="5.5" width="8" height="8"/><path d="M57 5.5 V3 H65 V11 H62.5"/>
  <path d="M107 2.5 L118 13.5 M118 2.5 L107 13.5" stroke-width="1.2"/>
</svg>
<svg class="abs" style="left:22px;top:22px" width="12" height="8" viewBox="0 0 12 8" fill="none" stroke="#444" stroke-width="1.5" stroke-linecap="round" stroke-linejoin="round"><path d="M1.5 1.8 L6 6 L10.5 1.8"/></svg>
<div class="phead">Breakout Room Participants (11)</div>
<div class="psearch">
  <svg class="abs" style="left:11px;top:9px" width="17" height="17" viewBox="0 0 17 17" fill="none" stroke="#666c75" stroke-width="1.4" stroke-linecap="round"><circle cx="7" cy="7.4" r="5.2"/><path d="M10.9 11.4 L14.6 15.2"/></svg>
  <span>Find a participant</span>
</div>
<div class="prow" style="top:103px"><div class="pav logo" style="border-radius:0"><svg width="30" height="30" viewBox="0 0 30 30"><path d="M2 10.4 C4.4 9.2 6.6 9.2 9 10.4 C9 15 8 18.4 5.5 20.4 C3 18.4 2 15 2 10.4Z" fill="#e9eef8" stroke="#d8363a" stroke-width="1"/><path d="M3.4 11.6 L5.5 17.6 L8 10.4" fill="none" stroke="#2b4fa8" stroke-width="1.5"/><path d="M6 9.4 L7.8 8 L8.6 9.6Z" fill="#d8363a"/><text x="10.2" y="15.2" font-size="5.6" font-weight="bold" fill="#4a9ad8" textLength="17.6" lengthAdjust="spacingAndGlyphs">PharmD</text><path d="M10.4 17.4 H27.6 M10.4 19 H27.6" stroke="#7cbbe6" stroke-width="0.9"/></svg></div><div class="pname" style="letter-spacing:0.22px">PharmD (Host, me)</div><svg class="abs" style="left:309px;top:13px" width="20" height="20" viewBox="0 0 20 20"><use href="#micoff"/></svg><svg class="abs" style="left:336px;top:13px" width="21" height="20" viewBox="0 0 21 20"><use href="#camoff"/></svg></div>
<div class="prow" style="top:151px"><div class="pav p1"><svg width="30" height="30" viewBox="0 0 30 30"><rect width="30" height="30" fill="#c49a55"/><rect x="20" y="0" width="10" height="30" fill="#b98d48"/><path d="M0 30 V17 C3 13.6 8 12.6 11 12.4 H17 C21 12.8 25 14.6 27 18 V30Z" fill="#25211f"/><ellipse cx="13.6" cy="7.6" rx="4" ry="5" fill="#a87850"/><path d="M9.4 6.4 C9.4 1.4 17.8 1.4 17.8 6.4 C16 4.4 11.4 4.4 9.4 6.4Z" fill="#1f1a17"/><path d="M9.8 8.6 C10.4 13.6 16.8 13.6 17.4 8.6 C16 11 11.2 11 9.8 8.6Z" fill="#2a221d"/><path d="M12.4 13 L13.6 21 L15 13Z" fill="#e6e2dc"/><rect x="10.6" y="21" width="5" height="7" fill="#6a5a4c"/><rect x="18" y="20.6" width="3.6" height="4.6" fill="#8a7a66"/></svg></div><div class="pname" style="letter-spacing:0.15px">Jaser Asweri</div><svg class="abs" style="left:281px;top:14px" width="20" height="15" viewBox="0 0 20 15"><rect x="0.5" y="0.5" width="19" height="14" rx="2.6" fill="#1da23a"/><path d="M10 3.2 L13.6 7.2 H11.5 V11.2 H8.5 V7.2 H6.4Z" fill="#e9fbe9"/></svg><svg class="abs" style="left:312px;top:13px" width="14" height="20" viewBox="0 0 14 20"><defs><linearGradient id="mg" x1="0" y1="0" x2="0" y2="1"><stop offset="0" stop-color="#c8c8cc"/><stop offset="1" stop-color="#77777d"/></linearGradient></defs><rect x="4" y="1" width="6" height="11" rx="3" fill="url(#mg)" stroke="#9a9aa0" stroke-width="0.8"/><path d="M1.6 8.6 C1.6 12.6 4 14.4 7 14.4 C10 14.4 12.4 12.6 12.4 8.6" fill="none" stroke="#8d8d93" stroke-width="1.3" stroke-linecap="round"/><path d="M7 14.4 V17.6 M4.2 18 H9.8" stroke="#8d8d93" stroke-width="1.3" stroke-linecap="round"/></svg><svg class="abs" style="left:336px;top:13px" width="21" height="20" viewBox="0 0 21 20"><use href="#camoff"/></svg></div>
<div class="prow" style="top:199px"><div class="pav p2"><svg width="30" height="30" viewBox="0 0 30 30"><rect width="30" height="30" fill="#2a2327"/><rect x="22" y="0" width="8" height="30" fill="#6a5f66"/><path d="M9 30 C9 18 13 6 21 1.6 C27 0.6 29.6 6 28 13 C27 20 24 26 22 30Z" fill="#f1eff2"/><path d="M4 30 C6 23 10 20 14 19 L24 22 L26 30Z" fill="#e9e7ec"/><ellipse cx="20.6" cy="10.8" rx="4.2" ry="5.6" transform="rotate(24 20.6 10.8)" fill="#dcb3a2"/><path d="M17.6 8.6 L20 9.2 M21.6 10 L23.6 10.8" stroke="#5a3f3a" stroke-width="0.8"/><path d="M18.4 13.6 C19.4 14.8 20.6 15 21.6 14.6" fill="none" stroke="#b86a68" stroke-width="0.8"/></svg></div><div class="pname" style="letter-spacing:0.65px">ersaa boamoud</div><svg class="abs" style="left:309px;top:13px" width="20" height="20" viewBox="0 0 20 20"><use href="#micoff"/></svg><svg class="abs" style="left:336px;top:13px" width="21" height="20" viewBox="0 0 21 20"><use href="#camoff"/></svg></div>
<div class="prow" style="top:247px"><div class="pav p3"><svg width="30" height="30" viewBox="0 0 30 30"><rect width="30" height="30" fill="#b9a838"/><rect x="0" y="0" width="9" height="14" fill="#d9c640"/><rect x="21" y="3" width="9" height="13" fill="#e0d27a"/><rect x="0" y="12" width="6" height="8" fill="#4f7a3a"/><path d="M0 30 V22 C4 19 9 18.6 12 18.6 H19 C23 19 27 20 30 23 V30Z" fill="#2f7a50"/><ellipse cx="15.4" cy="11.4" rx="5.2" ry="6.4" fill="#b88a62"/><path d="M10 9.6 C9.6 2.6 21.4 2.6 20.8 9.6 C18.6 6.6 12.4 6.6 10 9.6Z" fill="#201a16"/><path d="M10.4 12.6 C11 19.6 19.8 19.6 20.4 12.6 C18.6 16 12.4 16 10.4 12.6Z" fill="#2a211b"/><path d="M12.4 10.2 H14.4 M16.6 10.2 H18.6" stroke="#2a211b" stroke-width="0.9"/></svg></div><div class="pname" style="letter-spacing:-0.3px">ESSAM ABEDY 2207</div><svg class="abs" style="left:309px;top:13px" width="20" height="20" viewBox="0 0 20 20"><use href="#micoff"/></svg><svg class="abs" style="left:336px;top:13px" width="21" height="20" viewBox="0 0 21 20"><use href="#camoff"/></svg></div>
<div class="prow" style="top:295px"><div class="pav" style="background:#1ea58c;font-size:14.5px">FM</div><div class="pname" style="letter-spacing:0.4px">Fatma Mansor</div><svg class="abs" style="left:309px;top:13px" width="20" height="20" viewBox="0 0 20 20"><use href="#micoff"/></svg><svg class="abs" style="left:336px;top:13px" width="21" height="20" viewBox="0 0 21 20"><use href="#camoff"/></svg></div>
<div class="prow" style="top:343px"><div class="pav" style="background:#5a3a30;font-size:19px">M</div><div class="pname" style="letter-spacing:0.64px">Mohamed Thabt</div><svg class="abs" style="left:309px;top:13px" width="20" height="20" viewBox="0 0 20 20"><use href="#micoff"/></svg><svg class="abs" style="left:336px;top:13px" width="21" height="20" viewBox="0 0 21 20"><use href="#camoff"/></svg></div>
<div class="prow" style="top:391px"><div class="pav" style="background:#2b3d58;font-size:16.5px">N</div><div class="pname" style="letter-spacing:0px">nasser</div><svg class="abs" style="left:309px;top:13px" width="20" height="20" viewBox="0 0 20 20"><use href="#micoff"/></svg><svg class="abs" style="left:336px;top:13px" width="21" height="20" viewBox="0 0 21 20"><use href="#camoff"/></svg></div>
<div class="prow" style="top:439px"><div class="pav" style="background:#2a7ec2;font-size:15.5px">R</div><div class="pname" style="letter-spacing:0.25px">rajaa1316</div><svg class="abs" style="left:309px;top:13px" width="20" height="20" viewBox="0 0 20 20"><use href="#micoff"/></svg><svg class="abs" style="left:336px;top:13px" width="21" height="20" viewBox="0 0 21 20"><use href="#camoff"/></svg></div>
<div class="prow" style="top:487px"><div class="pav" style="background:#8e3fb2;font-size:13.5px">SG</div><div class="pname" style="letter-spacing:0.11px">Salsabil Ghazal 1349</div><svg class="abs" style="left:309px;top:13px" width="20" height="20" viewBox="0 0 20 20"><use href="#micoff"/></svg><svg class="abs" style="left:336px;top:13px" width="21" height="20" viewBox="0 0 21 20"><use href="#camoff"/></svg></div>
<div class="prow" style="top:535px"><div class="pav p4"><svg width="30" height="30" viewBox="0 0 30 30"><defs><linearGradient id="wl" x1="0" y1="0" x2="0.3" y2="1"><stop offset="0" stop-color="#5f5496"/><stop offset="0.5" stop-color="#7667a8"/><stop offset="1" stop-color="#a596c6"/></linearGradient></defs><rect width="30" height="30" fill="url(#wl)"/><ellipse cx="9" cy="22" rx="9" ry="5" fill="#8f80b8" opacity="0.7"/><ellipse cx="22" cy="12" rx="8" ry="6" fill="#6c5ea2" opacity="0.6"/><ellipse cx="16" cy="26" rx="10" ry="4" fill="#b4a6d0" opacity="0.6"/></svg></div><div class="pname" style="letter-spacing:0.19px">Walla 1439</div><svg class="abs" style="left:309px;top:13px" width="20" height="20" viewBox="0 0 20 20"><use href="#micoff"/></svg><svg class="abs" style="left:336px;top:13px" width="21" height="20" viewBox="0 0 21 20"><use href="#camoff"/></svg></div>
<div class="prow" style="top:583px"><div class="pav" style="background:#c8302c;font-size:15px;line-height:32px">س</div><div class="pname">سند العبيدي</div><svg class="abs" style="left:309px;top:13px" width="20" height="20" viewBox="0 0 20 20"><use href="#micoff"/></svg><svg class="abs" style="left:336px;top:13px" width="21" height="20" viewBox="0 0 21 20"><use href="#camoff"/></svg></div>
<div class="pbtn" style="left:92.5px;top:784px;width:70px">Mute All</div>
<div class="pbtn" style="left:255px;top:784px;width:28px">...</div>

</div>
<div id="taskbar">
<!-- windows logo -->
<svg class="abs" style="left:18px;top:13px" width="21" height="21" viewBox="0 0 21 21" fill="#fff"><path d="M0.5 3.4 L8.6 2.3 V9.8 H0.5Z M9.8 2.1 L20 0.7 V9.8 H9.8Z M0.5 11 H8.6 V18.5 L0.5 17.4Z M9.8 11 H20 V20 L9.8 18.7Z"/></svg>
<!-- search -->
<svg class="abs" style="left:74px;top:13px" width="22" height="21" viewBox="0 0 22 21" fill="none" stroke="#fff" stroke-width="1.7" stroke-linecap="round"><circle cx="13.6" cy="7.6" r="6.2"/><path d="M9.2 12.2 L1.6 19.6"/></svg>
<!-- task view -->
<svg class="abs" style="left:130px;top:13px" width="21" height="20" viewBox="0 0 21 20" fill="none" stroke="#fff" stroke-width="1.5"><rect x="2.8" y="5" width="10.6" height="9.6"/><path d="M0.8 1.2 H4 M12.4 1.2 H15.4 M0.8 18.6 H4 M12.4 18.6 H15.4 M2.8 1.2 H13.4 M2.8 18.6 H13.4" stroke-width="1.4"/><path d="M17.8 0.6 V3 M17.8 6 V19" stroke-width="1.6"/></svg>
<!-- mail -->
<svg class="abs" style="left:185px;top:9px" width="31" height="28" viewBox="0 0 31 28"><path d="M1 10 L15.5 0.8 L30 10 V26.5 H1Z" fill="#0a64b8"/><path d="M3.5 8.5 H27.5 V20 H3.5Z" fill="#fff"/><path d="M1 10 L15.5 19.5 L30 10 V26.8 H1Z" fill="#2aa7ea"/><path d="M1 26.8 L15.5 17.2 L30 26.8Z" fill="#1b8fdc"/></svg>
<!-- chrome -->
<svg class="abs" style="left:241px;top:9px" width="28" height="28" viewBox="0 0 28 28"><circle cx="14" cy="14" r="13.4" fill="#e8eaed"/><path d="M14 14 L2.4 7.3 A13.4 13.4 0 0 1 25.6 7.3 Z" fill="#e33b2e"/><path d="M14 14 L25.6 7.3 A13.4 13.4 0 0 1 14 27.4 Z" fill="#f8c01a"/><path d="M14 14 L14 27.4 A13.4 13.4 0 0 1 2.4 7.3 Z" fill="#2ea24c"/><path d="M14 7.6 H25.8 A13.4 13.4 0 0 0 2.4 7.3 L8.2 17.2Z" fill="#e33b2e"/><path d="M19.6 17.2 L14 27.4 A13.4 13.4 0 0 0 25.8 7.6 H14Z" fill="#f8c01a"/><path d="M8.4 17.2 L2.4 7.3 A13.4 13.4 0 0 0 14 27.4 L19.6 17.2Z" fill="#2ea24c"/><circle cx="14" cy="14" r="6.3" fill="#f4f6f8"/><circle cx="14" cy="14" r="5" fill="#4a8af4"/></svg>
<div class="tbt" style="left:274px">(no subject) - ema...</div>
<div class="abs" style="left:234px;top:44px;width:177px;height:3px;background:#8c8c8c"></div>
<!-- zoom active -->
<div class="abs" style="left:418px;top:0;width:188px;height:47px;background:#404040"></div>
<div class="abs" style="left:418px;top:44px;width:188px;height:3px;background:#9a9a9a"></div>
<svg class="abs" style="left:430px;top:10px" width="27" height="27" viewBox="0 0 27 27"><rect x="0.5" y="0.5" width="26" height="26" rx="7.5" fill="#4a8cff"/><rect x="5.2" y="8.8" width="11.2" height="9.4" rx="2.4" fill="#fff"/><path d="M17.4 12.2 L21.8 9.4 V17.6 L17.4 14.8Z" fill="#fff"/></svg>
<div class="tbt" style="left:462px;font-size:14.6px">Zoom Meeting</div>
<!-- drive -->
<svg class="abs" style="left:621px;top:10px" width="27" height="27" viewBox="0 0 27 27"><rect x="0.5" y="0.5" width="26" height="25.5" rx="3" fill="#3f7fe6"/><path d="M10.6 6 H16.4 L22.4 16.6 L19.6 21.4 H7.4 L4.6 16.6Z" fill="#e9eef6"/><path d="M13.5 10.8 L16.8 16.6 H10.2Z" fill="#3f7fe6"/><path d="M4.6 16.6 H22.4 L19.6 21.4 H7.4Z" fill="#c3cfe4"/></svg>
<!-- word -->
<svg class="abs" style="left:678px;top:10px" width="28" height="27" viewBox="0 0 28 27"><rect x="12" y="3" width="15" height="21" fill="#fff" stroke="#c9d3e6" stroke-width="0.6"/><path d="M18 7 H25 M18 10 H25 M18 13 H25 M18 16 H25 M18 19 H25" stroke="#2b579a" stroke-width="1.6"/><path d="M0.6 3.2 L16.4 0.6 V26.4 L0.6 23.8Z" fill="#2b579a"/><path d="M3.6 9 L5.6 18 L8 11 L10.4 18 L12.6 9" fill="none" stroke="#fff" stroke-width="1.7" stroke-linejoin="round" stroke-linecap="round"/></svg>
<!-- ppt -->
<svg class="abs" style="left:736px;top:10px" width="28" height="27" viewBox="0 0 28 27"><rect x="12" y="3" width="15" height="21" fill="#fbeee9" stroke="#e9c4b8" stroke-width="0.6"/><circle cx="21" cy="10" r="3.6" fill="none" stroke="#d24726" stroke-width="1.8"/><path d="M18 17 H25 M18 20 H25" stroke="#d24726" stroke-width="1.6"/><path d="M0.6 3.2 L16.4 0.6 V26.4 L0.6 23.8Z" fill="#d24726"/><path d="M5.6 18.6 V8.6 H8.8 C11.6 8.6 11.6 13.4 8.8 13.4 H5.6" fill="none" stroke="#fff" stroke-width="1.9" stroke-linejoin="round"/></svg>
<!-- sticky -->
<svg class="abs" style="left:794px;top:10px" width="27" height="27" viewBox="0 0 27 27"><rect x="0" y="0.5" width="26" height="26" fill="#fcd116"/><path d="M26 14 V26.5 H13.5Z" fill="#3b3a39"/><path d="M26 14 L13.5 26.5 L14.5 14.8Z" fill="#4d4a40"/></svg>
<!-- edge -->
<svg class="abs" style="left:850px;top:9px" width="29" height="29" viewBox="0 0 29 29"><defs><linearGradient id="eg1" x1="0" y1="0" x2="1" y2="1"><stop offset="0" stop-color="#35c1f1"/><stop offset="1" stop-color="#0b63bf"/></linearGradient><linearGradient id="eg2" x1="0" y1="0" x2="1" y2="0"><stop offset="0" stop-color="#1b9de2"/><stop offset="1" stop-color="#54d35f"/></linearGradient></defs><circle cx="14.5" cy="14.5" r="13.6" fill="url(#eg1)"/><path d="M1.2 12.4 A13.5 13.5 0 0 1 28 12.6 C28 17 24.6 18.6 21.4 18.6 C18.4 18.6 17 17 17.8 15.4 C18.6 13.6 17 10.8 13.4 10.8 C8 10.8 4 15.4 5.4 21 C2.2 18.6 0.8 15.4 1.2 12.4Z" fill="url(#eg2)"/><path d="M5.4 21 C4 15.4 8 10.8 13.4 10.8 C11 11.6 9.6 14.2 10.4 17.6 C11.4 21.8 16 25.2 22.6 23.4 C18.4 28 9 27.6 5.4 21Z" fill="#0c57a8"/></svg>
<!-- tray -->
<svg class="abs" style="left:1280px;top:19px" width="16" height="10" viewBox="0 0 16 10" fill="none" stroke="#fff" stroke-width="1.5"><path d="M0.8 9 L8 1.6 L15.2 9"/></svg>
<svg class="abs" style="left:1307px;top:14px" width="16" height="20" viewBox="0 0 16 20"><rect x="4" y="0.5" width="8" height="13" rx="3.4" fill="#fff"/><path d="M1.4 9.4 C1.4 14 4.4 15.8 8 15.8 C11.6 15.8 14.6 14 14.6 9.4" fill="none" stroke="#d8d8d8" stroke-width="1.3"/><path d="M8 15.8 V18.6 M4.8 19 H11.2" stroke="#d8d8d8" stroke-width="1.3"/></svg>
<svg class="abs" style="left:1334px;top:17px" width="22" height="18" viewBox="0 0 22 18"><rect x="0.8" y="1.4" width="17" height="10" fill="none" stroke="#fff" stroke-width="1.4"/><rect x="2.8" y="3.4" width="9" height="6" fill="#fff"/><rect x="18.4" y="4.4" width="1.8" height="4" fill="#fff"/><circle cx="14.2" cy="12.2" r="4.8" fill="#2fae4a"/><path d="M14.2 9 L16.6 12 H15.2 V15 H13.2 V12 H11.8Z" fill="#d9f5dd"/></svg>
<svg class="abs" style="left:1362px;top:15px" width="21" height="17" viewBox="0 0 21 17" fill="none" stroke="#fff" stroke-width="1.3" stroke-linejoin="round"><path d="M0.8 5.6 H4 L8.4 1.4 V15.6 L4 11.4 H0.8Z"/><path d="M11 5.6 C12.4 7 12.4 10 11 11.4 M13.6 3.4 C16.2 6 16.2 11 13.6 13.6" stroke-linecap="round"/><path d="M16.4 1.4 C20 5 20 12 16.4 15.6" stroke="#777" stroke-linecap="round"/></svg>
<svg class="abs" style="left:1392px;top:16px" width="18" height="17" viewBox="0 0 18 17" fill="none" stroke="#fff" stroke-width="1.5" stroke-linecap="round"><path d="M1.6 15.2 C1.6 7.6 7.6 1.8 15.4 1.8" stroke="#cfcfcf"/><path d="M5.8 15.4 C5.8 10 10 6 15.4 6"/><path d="M10 15.6 C10 12.4 12.4 10.2 15.4 10.2"/><circle cx="14.4" cy="14.6" r="1.3" fill="#fff" stroke="none"/></svg>
<div class="abs" style="left:1428px;top:13px;width:14px;color:#fff;font-size:13.5px;line-height:22px;text-align:center">&#x0639;</div>
<div class="tbc" style="top:5px;font-size:13.3px">12:13 PM</div>
<div class="tbc" style="top:25px;font-size:13.8px">10/11/2020</div>
<svg class="abs" style="left:1551px;top:14px" width="21" height="20" viewBox="0 0 21 20" fill="none" stroke="#fff" stroke-width="1.3" stroke-linejoin="round"><path d="M1 1.2 H20 V14.4 H13.4 L10.6 17.8 L7.8 14.4 H1Z"/></svg>
<div class="abs" style="left:1595px;top:8px;width:1px;height:39px;background:#555"></div>

</div>
</div>
</body>
</html>
